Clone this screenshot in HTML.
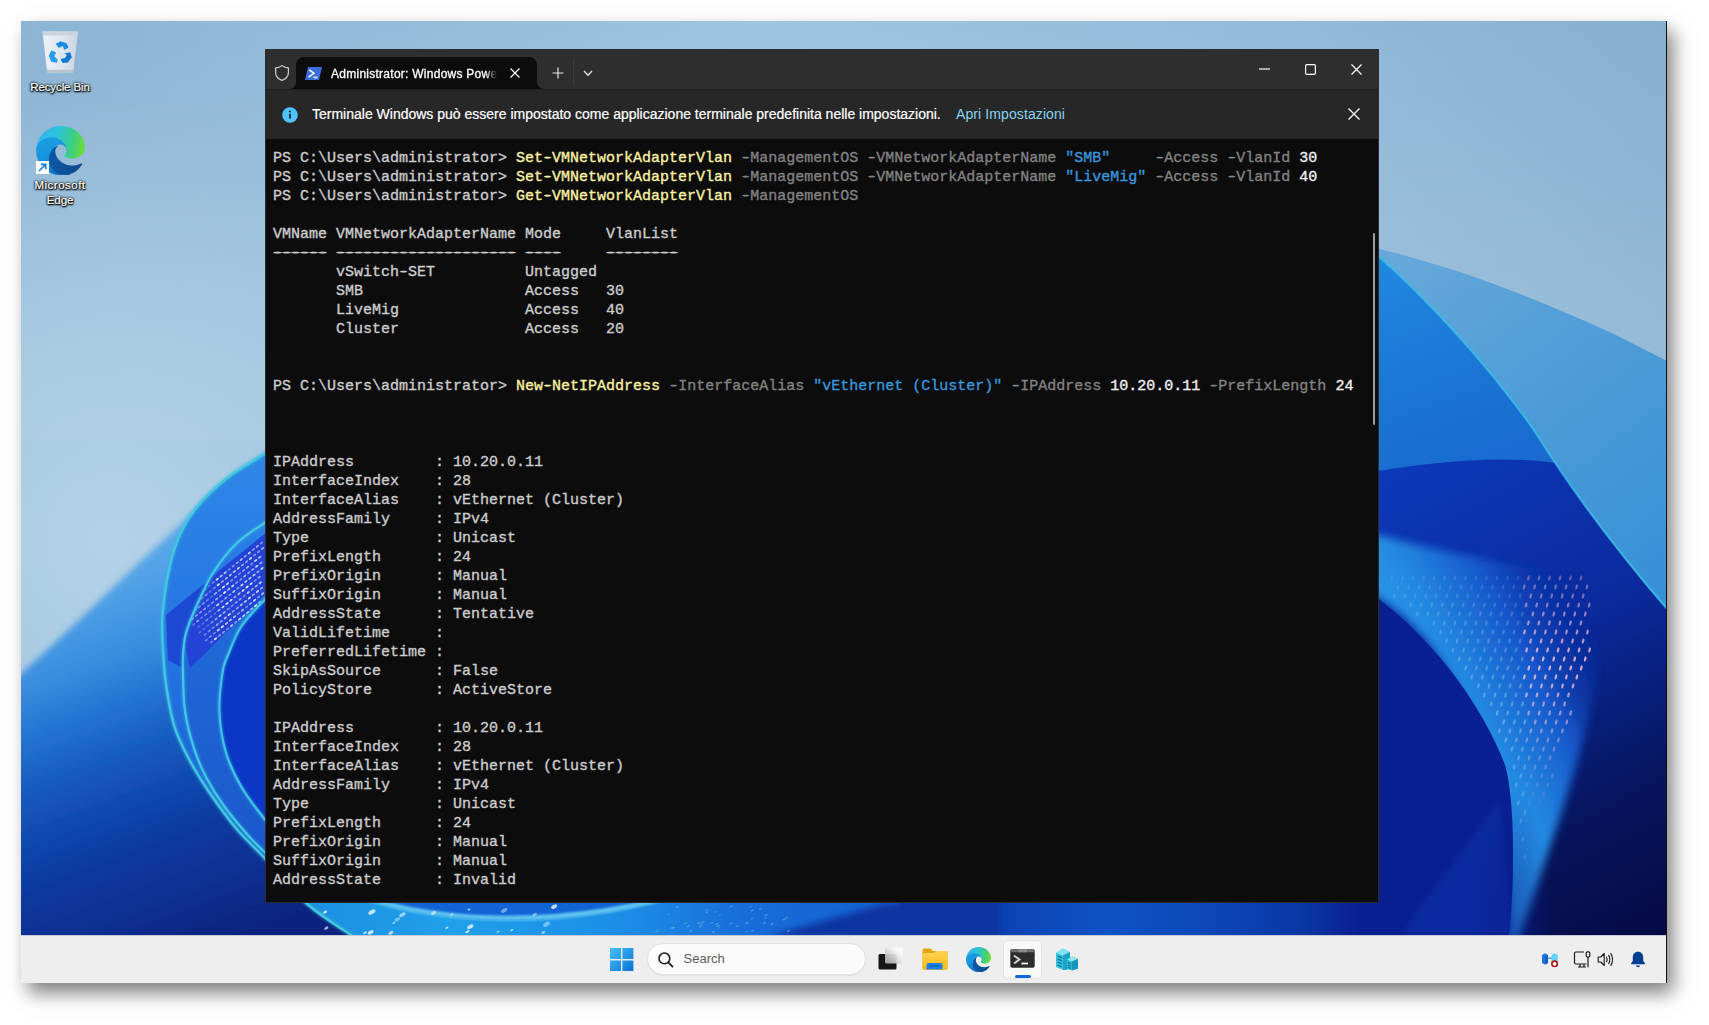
<!DOCTYPE html>
<html lang="it">
<head>
<meta charset="utf-8">
<title>Administrator: Windows PowerShell</title>
<style>
*{box-sizing:border-box;margin:0;padding:0}
html,body{width:1709px;height:1025px;overflow:hidden;background:#fff}
body{position:relative;font-family:"Liberation Sans",sans-serif}
#desk{position:absolute;left:21px;top:21px;width:1645px;height:962px;overflow:hidden;background:#9dc0dc}
#shadow{position:absolute;left:21px;top:21px;width:1645px;height:962px;box-shadow:1px 0 0 0 #111,7px 10px 18px 0 rgba(0,0,0,.5)}
#wall{position:absolute;left:0;top:0;width:1645px;height:914px;display:block}
#taskbar{position:absolute;left:0;top:914px;width:1645px;height:48px;background:#eeeeee;box-shadow:inset 0 1px 0 rgba(120,130,160,.35)}
#term{position:absolute;left:244px;top:28px;width:1114px;height:854px;background:#0c0c0c;border:1px solid #2c2c2c}
#tbar{position:absolute;left:0;top:0;width:1112px;height:39px;background:#2e2e2e}
#tab{position:absolute;left:30px;top:7px;width:241px;height:32px;background:#0c0c0c;border-radius:8px 8px 0 0}
#info{position:absolute;left:0;top:39px;width:1112px;height:50px;background:#272727;border-top:1px solid #1f1f1f}
#out{position:absolute;left:7px;top:99px;-webkit-text-stroke:.35px currentColor;font-family:"Liberation Mono",monospace;font-size:15px;line-height:19px;color:#cccccc;white-space:pre}
.d{text-shadow:2px 0 0 currentColor,-2px 0 0 currentColor}.h{text-shadow:1.200px 0 0 currentColor,-1.200px 0 0 currentColor}.y{color:#f9f1a5}.g{color:#828282}.b{color:#3a96dd}.w{color:#f2f2f2}
#ttl{position:absolute;left:35px;top:8px;width:166px;height:18px;overflow:hidden;white-space:nowrap;font-size:12px;letter-spacing:.26px;-webkit-text-stroke:.3px #fff;line-height:18px;color:#fff;-webkit-mask-image:linear-gradient(90deg,#000 93%,transparent);mask-image:linear-gradient(90deg,#000 93%,transparent)}
#itx{position:absolute;left:46px;top:14px;-webkit-text-stroke:.2px #fff;font-size:14px;line-height:20px;color:#fff;white-space:nowrap}
#ilk{position:absolute;left:690px;top:14px;letter-spacing:.1px;font-size:14px;line-height:20px;color:#86d3f0;white-space:nowrap}
#sb{position:absolute;left:1107px;top:183px;width:2px;height:192px;background:#9d9d9d;border-radius:1px}
.dl{position:absolute;text-align:center;color:#fff;font-size:11.500px;letter-spacing:-.1px;line-height:15px;text-shadow:0 1px 2px #000,0 0 2px #000,0 0 3px rgba(0,0,0,.9),1px 1px 1px rgba(0,0,0,.8);-webkit-text-stroke:.2px #fff}
#srch{position:absolute;left:626px;top:8px;width:219px;height:32px;border-radius:16px;background:#fbfbfb;border:1px solid #e2e2e2;box-shadow:0 1px 1px rgba(0,0,0,.06)}
#srch span{position:absolute;left:35.500px;top:6px;font-size:13px;line-height:18px;color:#5a5a5a}
</style>
</head>
<body>
<div id="shadow"></div>
<div id="desk">
<svg id="wall" viewBox="21 21 1645 914">
<defs>
<linearGradient id="sky" x1="0" y1="0" x2="1" y2="0"><stop offset="0" stop-color="#8cb4d4"/><stop offset=".45" stop-color="#9dc5e0"/><stop offset=".7" stop-color="#96bedc"/><stop offset="1" stop-color="#86b0d0"/></linearGradient>
<radialGradient id="skyhl" cx="110" cy="540" r="440" gradientUnits="userSpaceOnUse"><stop offset="0" stop-color="#b4d2e7"/><stop offset=".4" stop-color="#b0cfe5" stop-opacity=".8"/><stop offset="1" stop-color="#a8c8e0" stop-opacity="0"/></radialGradient>
<linearGradient id="lp" x1="181" y1="487" x2="335" y2="900" gradientUnits="userSpaceOnUse"><stop offset="0" stop-color="#6ab2ea"/><stop offset=".18" stop-color="#4f9fe6"/><stop offset=".3" stop-color="#3a8ee0"/><stop offset=".41" stop-color="#2474d2"/><stop offset=".55" stop-color="#1456bc"/><stop offset=".73" stop-color="#0c3aa0"/><stop offset=".86" stop-color="#0a3094"/><stop offset="1" stop-color="#08247e"/></linearGradient>
<linearGradient id="ring1" x1="230" y1="460" x2="230" y2="860" gradientUnits="userSpaceOnUse"><stop offset="0" stop-color="#2f86e6"/><stop offset=".5" stop-color="#2273e2"/><stop offset="1" stop-color="#1a59cc"/></linearGradient>
<linearGradient id="ring2" x1="0" y1="520" x2="0" y2="850" gradientUnits="userSpaceOnUse"><stop offset="0" stop-color="#2b84ea"/><stop offset=".35" stop-color="#2068d8"/><stop offset="1" stop-color="#1a58cc"/></linearGradient><linearGradient id="rp1" x1="1400" y1="250" x2="1666" y2="600" gradientUnits="userSpaceOnUse"><stop offset="0" stop-color="#66a8da"/><stop offset=".5" stop-color="#4c9bd8"/><stop offset="1" stop-color="#3690d6"/></linearGradient>
<linearGradient id="rp2" x1="1379" y1="260" x2="1500" y2="600" gradientUnits="userSpaceOnUse"><stop offset="0" stop-color="#2088e0"/><stop offset=".5" stop-color="#1a70d2"/><stop offset="1" stop-color="#1560c8"/></linearGradient>
<linearGradient id="rdark" x1="1420" y1="460" x2="1666" y2="935" gradientUnits="userSpaceOnUse"><stop offset="0" stop-color="#0c38ba"/><stop offset=".4" stop-color="#0a2a9c"/><stop offset=".75" stop-color="#07145c"/><stop offset="1" stop-color="#050a44"/></linearGradient>
<linearGradient id="rband" x1="1430" y1="730" x2="1600" y2="640" gradientUnits="userSpaceOnUse"><stop offset="0" stop-color="#2a9ce8"/><stop offset=".3" stop-color="#2386e0"/><stop offset=".62" stop-color="#1658cc"/><stop offset="1" stop-color="#0b30a8" stop-opacity="0"/></linearGradient>
<linearGradient id="bot" x1="21" y1="0" x2="1666" y2="0" gradientUnits="userSpaceOnUse"><stop offset="0" stop-color="#0d3aa4"/><stop offset=".17" stop-color="#0a3098"/><stop offset=".5" stop-color="#0a2f98"/><stop offset=".6" stop-color="#0c44b4"/><stop offset=".66" stop-color="#0e52c4"/><stop offset=".72" stop-color="#0c48b8"/><stop offset=".78" stop-color="#0a36a4"/><stop offset=".814" stop-color="#0a1f90"/><stop offset="1" stop-color="#050a48"/></linearGradient><linearGradient id="botb" x1="300" y1="0" x2="900" y2="0" gradientUnits="userSpaceOnUse"><stop offset="0" stop-color="#1c8ee0"/><stop offset=".25" stop-color="#20a0ea"/><stop offset=".55" stop-color="#1c8ce6"/><stop offset=".75" stop-color="#176cd8"/><stop offset="1" stop-color="#1560d0"/></linearGradient><filter id="bl1"><feGaussianBlur stdDeviation="1"/></filter>
<linearGradient id="skyv" x1="0" y1="21" x2="0" y2="420" gradientUnits="userSpaceOnUse"><stop offset="0" stop-color="#fff" stop-opacity="0"/><stop offset="1" stop-color="#fff" stop-opacity=".16"/></linearGradient><radialGradient id="rfade" cx=".5" cy=".5" r=".5"><stop offset="0" stop-color="#0a2090" stop-opacity=".6"/><stop offset=".5" stop-color="#0a2090" stop-opacity=".35"/><stop offset="1" stop-color="#0a2090" stop-opacity="0"/></radialGradient><filter id="bl3"><feGaussianBlur stdDeviation="3"/></filter>
<filter id="bl4"><feGaussianBlur stdDeviation="4"/></filter><filter id="bl6"><feGaussianBlur stdDeviation="6"/></filter>
</defs>
<rect x="21" y="21" width="1645" height="914" fill="url(#sky)"/>
<rect x="21" y="21" width="1645" height="420" fill="url(#skyv)"/><rect x="21" y="21" width="700" height="914" fill="url(#skyhl)"/>
<path d="M-10 702 C60 640 120 580 172 532 C210 497 240 472 290 435 L440 435 L440 960 L-10 960Z" fill="url(#lp)" filter="url(#bl3)"/>
<g>
<rect x="400" y="890" width="1266" height="50" fill="url(#bot)"/>
<path d="M290 885 L306 903 L351 935 L368 948 L900 948 L900 885Z" fill="url(#botb)"/>
<path d="M340 890 C420 925 560 935 700 890Z" fill="#1263d6"/>
<path d="M340 888 C420 923 560 933 700 888" fill="none" stroke="#6ad6f4" stroke-width="5" opacity=".85" filter="url(#bl1)"/>

<path d="M766 937 L880 905 L1000 890 L1000 940Z" fill="#0b34a2" filter="url(#bl3)"/>
<ellipse cx="470.3" cy="926.8" rx="3.4" ry="1.8" transform="rotate(-30 470.3 926.8)" fill="#dff4ff" opacity="0.87"/><ellipse cx="498.1" cy="931.8" rx="1.6" ry="0.8" transform="rotate(-30 498.1 931.8)" fill="#dff4ff" opacity="0.63"/><ellipse cx="546.5" cy="924.2" rx="3.7" ry="2.0" transform="rotate(-30 546.5 924.2)" fill="#dff4ff" opacity="0.46"/><ellipse cx="433.6" cy="912.9" rx="2.8" ry="1.5" transform="rotate(-30 433.6 912.9)" fill="#dff4ff" opacity="0.69"/><ellipse cx="325.1" cy="912.1" rx="2.2" ry="1.2" transform="rotate(-30 325.1 912.1)" fill="#dff4ff" opacity="0.86"/><ellipse cx="504.2" cy="910.5" rx="3.4" ry="1.8" transform="rotate(-30 504.2 910.5)" fill="#dff4ff" opacity="0.47"/><ellipse cx="469.0" cy="909.5" rx="1.5" ry="0.8" transform="rotate(-30 469.0 909.5)" fill="#dff4ff" opacity="0.84"/><ellipse cx="371.9" cy="912.0" rx="3.9" ry="2.1" transform="rotate(-30 371.9 912.0)" fill="#dff4ff" opacity="0.84"/><ellipse cx="390.9" cy="932.9" rx="2.8" ry="1.5" transform="rotate(-30 390.9 932.9)" fill="#dff4ff" opacity="0.74"/><ellipse cx="370.7" cy="932.3" rx="3.2" ry="1.7" transform="rotate(-30 370.7 932.3)" fill="#dff4ff" opacity="0.88"/><ellipse cx="534.7" cy="914.4" rx="2.4" ry="1.3" transform="rotate(-30 534.7 914.4)" fill="#dff4ff" opacity="0.48"/><ellipse cx="393.7" cy="922.9" rx="1.5" ry="0.8" transform="rotate(-30 393.7 922.9)" fill="#dff4ff" opacity="0.74"/><ellipse cx="402.4" cy="914.7" rx="3.5" ry="1.8" transform="rotate(-30 402.4 914.7)" fill="#dff4ff" opacity="0.64"/><ellipse cx="397.2" cy="919.5" rx="3.2" ry="1.7" transform="rotate(-30 397.2 919.5)" fill="#dff4ff" opacity="0.43"/><ellipse cx="554.1" cy="906.6" rx="3.3" ry="1.8" transform="rotate(-30 554.1 906.6)" fill="#dff4ff" opacity="0.82"/><ellipse cx="326.3" cy="928.1" rx="2.4" ry="1.3" transform="rotate(-30 326.3 928.1)" fill="#dff4ff" opacity="0.69"/><ellipse cx="365.1" cy="932.7" rx="2.0" ry="1.1" transform="rotate(-30 365.1 932.7)" fill="#dff4ff" opacity="0.78"/><ellipse cx="543.3" cy="932.4" rx="2.3" ry="1.2" transform="rotate(-30 543.3 932.4)" fill="#dff4ff" opacity="0.58"/><ellipse cx="446.9" cy="927.7" rx="1.8" ry="0.9" transform="rotate(-30 446.9 927.7)" fill="#dff4ff" opacity="0.77"/><ellipse cx="511.7" cy="930.1" rx="1.6" ry="0.8" transform="rotate(-30 511.7 930.1)" fill="#dff4ff" opacity="0.87"/><ellipse cx="467.4" cy="931.7" rx="2.3" ry="1.2" transform="rotate(-30 467.4 931.7)" fill="#dff4ff" opacity="0.86"/><ellipse cx="451.7" cy="914.7" rx="2.3" ry="1.2" transform="rotate(-30 451.7 914.7)" fill="#dff4ff" opacity="0.49"/><ellipse cx="746.5" cy="931.9" rx="1.8" ry=".7" transform="rotate(-25 746.5 931.9)" fill="#8fd0ff" opacity="0.25"/><ellipse cx="656.8" cy="931.7" rx="1.8" ry=".7" transform="rotate(-25 656.8 931.7)" fill="#8fd0ff" opacity="0.36"/><ellipse cx="706.8" cy="912.2" rx="1.8" ry=".7" transform="rotate(-25 706.8 912.2)" fill="#8fd0ff" opacity="0.38"/><ellipse cx="765.7" cy="917.8" rx="1.8" ry=".7" transform="rotate(-25 765.7 917.8)" fill="#8fd0ff" opacity="0.33"/><ellipse cx="657.8" cy="929.8" rx="1.8" ry=".7" transform="rotate(-25 657.8 929.8)" fill="#8fd0ff" opacity="0.21"/><ellipse cx="719.1" cy="927.8" rx="1.8" ry=".7" transform="rotate(-25 719.1 927.8)" fill="#8fd0ff" opacity="0.24"/><ellipse cx="752.4" cy="930.7" rx="1.8" ry=".7" transform="rotate(-25 752.4 930.7)" fill="#8fd0ff" opacity="0.39"/><ellipse cx="760.3" cy="908.8" rx="1.8" ry=".7" transform="rotate(-25 760.3 908.8)" fill="#8fd0ff" opacity="0.33"/><ellipse cx="670.9" cy="928.0" rx="1.8" ry=".7" transform="rotate(-25 670.9 928.0)" fill="#8fd0ff" opacity="0.29"/><ellipse cx="713.4" cy="932.0" rx="1.8" ry=".7" transform="rotate(-25 713.4 932.0)" fill="#8fd0ff" opacity="0.46"/><ellipse cx="786.6" cy="917.8" rx="1.8" ry=".7" transform="rotate(-25 786.6 917.8)" fill="#8fd0ff" opacity="0.35"/><ellipse cx="752.1" cy="918.5" rx="1.8" ry=".7" transform="rotate(-25 752.1 918.5)" fill="#8fd0ff" opacity="0.29"/><ellipse cx="706.5" cy="909.8" rx="1.8" ry=".7" transform="rotate(-25 706.5 909.8)" fill="#8fd0ff" opacity="0.31"/><ellipse cx="788.4" cy="931.0" rx="1.8" ry=".7" transform="rotate(-25 788.4 931.0)" fill="#8fd0ff" opacity="0.39"/><ellipse cx="719.9" cy="914.8" rx="1.8" ry=".7" transform="rotate(-25 719.9 914.8)" fill="#8fd0ff" opacity="0.23"/><ellipse cx="688.1" cy="926.3" rx="1.8" ry=".7" transform="rotate(-25 688.1 926.3)" fill="#8fd0ff" opacity="0.46"/><ellipse cx="700.6" cy="926.4" rx="1.8" ry=".7" transform="rotate(-25 700.6 926.4)" fill="#8fd0ff" opacity="0.43"/><ellipse cx="747.2" cy="923.3" rx="1.8" ry=".7" transform="rotate(-25 747.2 923.3)" fill="#8fd0ff" opacity="0.43"/><ellipse cx="700.9" cy="924.3" rx="1.8" ry=".7" transform="rotate(-25 700.9 924.3)" fill="#8fd0ff" opacity="0.28"/><ellipse cx="718.0" cy="926.0" rx="1.8" ry=".7" transform="rotate(-25 718.0 926.0)" fill="#8fd0ff" opacity="0.41"/><ellipse cx="691.1" cy="930.6" rx="1.8" ry=".7" transform="rotate(-25 691.1 930.6)" fill="#8fd0ff" opacity="0.39"/><ellipse cx="731.3" cy="906.3" rx="1.8" ry=".7" transform="rotate(-25 731.3 906.3)" fill="#8fd0ff" opacity="0.36"/><ellipse cx="685.1" cy="923.5" rx="1.8" ry=".7" transform="rotate(-25 685.1 923.5)" fill="#8fd0ff" opacity="0.34"/><ellipse cx="764.3" cy="922.8" rx="1.8" ry=".7" transform="rotate(-25 764.3 922.8)" fill="#8fd0ff" opacity="0.44"/><ellipse cx="698.7" cy="922.7" rx="1.8" ry=".7" transform="rotate(-25 698.7 922.7)" fill="#8fd0ff" opacity="0.42"/><ellipse cx="765.9" cy="915.1" rx="1.8" ry=".7" transform="rotate(-25 765.9 915.1)" fill="#8fd0ff" opacity="0.45"/><ellipse cx="771.8" cy="923.9" rx="1.8" ry=".7" transform="rotate(-25 771.8 923.9)" fill="#8fd0ff" opacity="0.49"/><ellipse cx="783.9" cy="919.5" rx="1.8" ry=".7" transform="rotate(-25 783.9 919.5)" fill="#8fd0ff" opacity="0.36"/><ellipse cx="673.3" cy="927.8" rx="1.8" ry=".7" transform="rotate(-25 673.3 927.8)" fill="#8fd0ff" opacity="0.48"/><ellipse cx="716.8" cy="924.0" rx="1.8" ry=".7" transform="rotate(-25 716.8 924.0)" fill="#8fd0ff" opacity="0.42"/><ellipse cx="752.2" cy="910.5" rx="1.8" ry=".7" transform="rotate(-25 752.2 910.5)" fill="#8fd0ff" opacity="0.43"/><ellipse cx="731.3" cy="923.3" rx="1.8" ry=".7" transform="rotate(-25 731.3 923.3)" fill="#8fd0ff" opacity="0.33"/><ellipse cx="737.3" cy="926.1" rx="1.8" ry=".7" transform="rotate(-25 737.3 926.1)" fill="#8fd0ff" opacity="0.39"/><ellipse cx="750.9" cy="906.7" rx="1.8" ry=".7" transform="rotate(-25 750.9 906.7)" fill="#8fd0ff" opacity="0.25"/><ellipse cx="711.7" cy="922.9" rx="1.8" ry=".7" transform="rotate(-25 711.7 922.9)" fill="#8fd0ff" opacity="0.27"/><ellipse cx="746.0" cy="922.4" rx="1.8" ry=".7" transform="rotate(-25 746.0 922.4)" fill="#8fd0ff" opacity="0.21"/><ellipse cx="716.0" cy="911.9" rx="1.8" ry=".7" transform="rotate(-25 716.0 911.9)" fill="#8fd0ff" opacity="0.22"/><ellipse cx="668.7" cy="914.3" rx="1.8" ry=".7" transform="rotate(-25 668.7 914.3)" fill="#8fd0ff" opacity="0.25"/><ellipse cx="677.1" cy="906.9" rx="1.8" ry=".7" transform="rotate(-25 677.1 906.9)" fill="#8fd0ff" opacity="0.34"/><ellipse cx="703.2" cy="921.9" rx="1.8" ry=".7" transform="rotate(-25 703.2 921.9)" fill="#8fd0ff" opacity="0.38"/>
</g>
<!-- left petal -->
<path d="M292.0 436.0 C287.4 439.0 275.5 446.8 264.5 454.0 C253.5 461.2 237.8 469.5 226.0 479.0 C214.2 488.5 202.2 500.3 194.0 511.0 C185.8 521.7 181.0 531.5 176.5 543.0 C172.0 554.5 169.3 567.8 167.0 580.0 C164.7 592.2 163.2 606.0 162.5 616.0 C161.8 626.0 161.9 628.8 162.5 640.0 C163.1 651.2 163.8 668.7 165.8 683.0 C167.8 697.3 170.4 713.2 174.3 726.0 C178.2 738.8 183.3 748.6 189.4 760.0 C195.5 771.4 202.9 783.0 210.8 794.5 C218.7 806.0 227.7 818.4 236.6 829.0 C245.5 839.6 252.9 845.7 264.5 858.0 L292 886 L292 436Z" fill="url(#ring1)"/>
<path d="M166 615 L292 512 L292 568 L186 670 L168 660Z" fill="#1b49d2"/>
<path d="M292.0 506.0 C287.4 508.8 273.7 516.8 264.5 523.0 C255.3 529.2 245.6 534.7 237.0 543.0 C228.4 551.3 219.8 562.3 213.0 573.0 C206.2 583.7 200.5 597.0 196.0 607.0 C191.5 617.0 188.2 625.0 186.0 633.0 C183.8 641.0 183.5 648.5 183.0 655.0 C182.5 661.5 182.7 662.7 183.0 672.0 C183.3 681.3 183.2 698.5 185.0 711.0 C186.8 723.5 190.1 736.0 193.6 747.0 C197.1 758.0 200.9 767.2 206.0 777.0 C211.1 786.8 217.3 796.7 224.0 806.0 C230.7 815.3 239.2 825.3 246.0 833.0 C252.8 840.7 256.8 844.8 264.5 852.0 C272.2 859.2 287.4 872.0 292.0 876.0 L292 506Z" fill="url(#ring2)"/>
<path d="M210 578 L292 512 L292 568 L190 668 L184 640Z" fill="#2343d6"/>
<clipPath id="cpS"><path d="M292.0 506.0 C287.4 508.8 273.7 516.8 264.5 523.0 C255.3 529.2 245.6 534.7 237.0 543.0 C228.4 551.3 219.8 562.3 213.0 573.0 C206.2 583.7 200.5 597.0 196.0 607.0 C191.5 617.0 188.2 625.0 186.0 633.0 C183.8 641.0 183.5 648.5 183.0 655.0 C182.5 661.5 182.7 662.7 183.0 672.0 C183.3 681.3 183.2 698.5 185.0 711.0 C186.8 723.5 190.1 736.0 193.6 747.0 C197.1 758.0 200.9 767.2 206.0 777.0 C211.1 786.8 217.3 796.7 224.0 806.0 C230.7 815.3 239.2 825.3 246.0 833.0 C252.8 840.7 256.8 844.8 264.5 852.0 C272.2 859.2 287.4 872.0 292.0 876.0 L292 506Z"/></clipPath><g clip-path="url(#cpS)"><ellipse cx="181.0" cy="609.0" rx="1.900" ry=".95" transform="rotate(-39 181.0 609.0)" fill="#e6ecff" opacity="0.36"/><ellipse cx="185.0" cy="605.7" rx="1.900" ry=".95" transform="rotate(-39 185.0 605.7)" fill="#f4e4ff" opacity="0.48"/><ellipse cx="189.0" cy="602.4" rx="1.900" ry=".95" transform="rotate(-39 189.0 602.4)" fill="#e6ecff" opacity="0.36"/><ellipse cx="193.1" cy="599.1" rx="1.900" ry=".95" transform="rotate(-39 193.1 599.1)" fill="#e6ecff" opacity="0.28"/><ellipse cx="197.1" cy="595.8" rx="1.900" ry=".95" transform="rotate(-39 197.1 595.8)" fill="#e6ecff" opacity="0.36"/><ellipse cx="201.1" cy="592.5" rx="1.900" ry=".95" transform="rotate(-39 201.1 592.5)" fill="#ffffff" opacity="0.46"/><ellipse cx="205.1" cy="589.2" rx="1.900" ry=".95" transform="rotate(-39 205.1 589.2)" fill="#ffffff" opacity="0.36"/><ellipse cx="209.1" cy="585.9" rx="1.900" ry=".95" transform="rotate(-39 209.1 585.9)" fill="#e6ecff" opacity="0.25"/><ellipse cx="213.2" cy="582.6" rx="1.900" ry=".95" transform="rotate(-39 213.2 582.6)" fill="#e6ecff" opacity="0.41"/><ellipse cx="217.2" cy="579.3" rx="1.900" ry=".95" transform="rotate(-39 217.2 579.3)" fill="#f4e4ff" opacity="0.94"/><ellipse cx="221.2" cy="576.0" rx="1.900" ry=".95" transform="rotate(-39 221.2 576.0)" fill="#e6ecff" opacity="0.76"/><ellipse cx="225.2" cy="572.7" rx="1.900" ry=".95" transform="rotate(-39 225.2 572.7)" fill="#e6ecff" opacity="0.76"/><ellipse cx="229.2" cy="569.4" rx="1.900" ry=".95" transform="rotate(-39 229.2 569.4)" fill="#e6ecff" opacity="0.41"/><ellipse cx="233.3" cy="566.1" rx="1.900" ry=".95" transform="rotate(-39 233.3 566.1)" fill="#ffffff" opacity="0.43"/><ellipse cx="237.3" cy="562.8" rx="1.900" ry=".95" transform="rotate(-39 237.3 562.8)" fill="#ffffff" opacity="0.50"/><ellipse cx="241.3" cy="559.5" rx="1.900" ry=".95" transform="rotate(-39 241.3 559.5)" fill="#f4e4ff" opacity="0.73"/><ellipse cx="245.3" cy="556.2" rx="1.900" ry=".95" transform="rotate(-39 245.3 556.2)" fill="#e6ecff" opacity="0.58"/><ellipse cx="249.3" cy="552.9" rx="1.900" ry=".95" transform="rotate(-39 249.3 552.9)" fill="#e6ecff" opacity="0.86"/><ellipse cx="253.4" cy="549.6" rx="1.900" ry=".95" transform="rotate(-39 253.4 549.6)" fill="#f4e4ff" opacity="0.53"/><ellipse cx="257.4" cy="546.3" rx="1.900" ry=".95" transform="rotate(-39 257.4 546.3)" fill="#e6ecff" opacity="0.67"/><ellipse cx="261.4" cy="543.0" rx="1.900" ry=".95" transform="rotate(-39 261.4 543.0)" fill="#e6ecff" opacity="0.45"/><ellipse cx="186.2" cy="611.2" rx="1.900" ry=".95" transform="rotate(-39 186.2 611.2)" fill="#e6ecff" opacity="0.30"/><ellipse cx="190.2" cy="607.9" rx="1.900" ry=".95" transform="rotate(-39 190.2 607.9)" fill="#ffffff" opacity="0.52"/><ellipse cx="194.2" cy="604.6" rx="1.900" ry=".95" transform="rotate(-39 194.2 604.6)" fill="#f4e4ff" opacity="0.43"/><ellipse cx="198.2" cy="601.3" rx="1.900" ry=".95" transform="rotate(-39 198.2 601.3)" fill="#e6ecff" opacity="0.45"/><ellipse cx="202.3" cy="598.0" rx="1.900" ry=".95" transform="rotate(-39 202.3 598.0)" fill="#ffffff" opacity="0.31"/><ellipse cx="206.3" cy="594.7" rx="1.900" ry=".95" transform="rotate(-39 206.3 594.7)" fill="#ffffff" opacity="0.39"/><ellipse cx="210.3" cy="591.4" rx="1.900" ry=".95" transform="rotate(-39 210.3 591.4)" fill="#f4e4ff" opacity="0.34"/><ellipse cx="214.3" cy="588.1" rx="1.900" ry=".95" transform="rotate(-39 214.3 588.1)" fill="#ffffff" opacity="0.34"/><ellipse cx="218.3" cy="584.8" rx="1.900" ry=".95" transform="rotate(-39 218.3 584.8)" fill="#ffffff" opacity="0.87"/><ellipse cx="222.4" cy="581.5" rx="1.900" ry=".95" transform="rotate(-39 222.4 581.5)" fill="#ffffff" opacity="0.52"/><ellipse cx="226.4" cy="578.2" rx="1.900" ry=".95" transform="rotate(-39 226.4 578.2)" fill="#e6ecff" opacity="0.66"/><ellipse cx="230.4" cy="574.9" rx="1.900" ry=".95" transform="rotate(-39 230.4 574.9)" fill="#ffffff" opacity="0.62"/><ellipse cx="234.4" cy="571.6" rx="1.900" ry=".95" transform="rotate(-39 234.4 571.6)" fill="#ffffff" opacity="0.71"/><ellipse cx="238.4" cy="568.3" rx="1.900" ry=".95" transform="rotate(-39 238.4 568.3)" fill="#f4e4ff" opacity="0.83"/><ellipse cx="242.5" cy="565.0" rx="1.900" ry=".95" transform="rotate(-39 242.5 565.0)" fill="#f4e4ff" opacity="0.59"/><ellipse cx="246.5" cy="561.7" rx="1.900" ry=".95" transform="rotate(-39 246.5 561.7)" fill="#f4e4ff" opacity="0.58"/><ellipse cx="250.5" cy="558.4" rx="1.900" ry=".95" transform="rotate(-39 250.5 558.4)" fill="#ffffff" opacity="0.82"/><ellipse cx="254.5" cy="555.1" rx="1.900" ry=".95" transform="rotate(-39 254.5 555.1)" fill="#e6ecff" opacity="0.47"/><ellipse cx="258.5" cy="551.8" rx="1.900" ry=".95" transform="rotate(-39 258.5 551.8)" fill="#ffffff" opacity="0.46"/><ellipse cx="262.6" cy="548.5" rx="1.900" ry=".95" transform="rotate(-39 262.6 548.5)" fill="#f4e4ff" opacity="0.66"/><ellipse cx="187.3" cy="616.7" rx="1.900" ry=".95" transform="rotate(-39 187.3 616.7)" fill="#e6ecff" opacity="0.27"/><ellipse cx="191.4" cy="613.4" rx="1.900" ry=".95" transform="rotate(-39 191.4 613.4)" fill="#e6ecff" opacity="0.28"/><ellipse cx="195.4" cy="610.1" rx="1.900" ry=".95" transform="rotate(-39 195.4 610.1)" fill="#e6ecff" opacity="0.28"/><ellipse cx="199.4" cy="606.8" rx="1.900" ry=".95" transform="rotate(-39 199.4 606.8)" fill="#f4e4ff" opacity="0.45"/><ellipse cx="203.4" cy="603.5" rx="1.900" ry=".95" transform="rotate(-39 203.4 603.5)" fill="#ffffff" opacity="0.41"/><ellipse cx="207.4" cy="600.2" rx="1.900" ry=".95" transform="rotate(-39 207.4 600.2)" fill="#ffffff" opacity="0.34"/><ellipse cx="211.5" cy="596.9" rx="1.900" ry=".95" transform="rotate(-39 211.5 596.9)" fill="#e6ecff" opacity="0.22"/><ellipse cx="215.5" cy="593.6" rx="1.900" ry=".95" transform="rotate(-39 215.5 593.6)" fill="#ffffff" opacity="0.57"/><ellipse cx="219.5" cy="590.3" rx="1.900" ry=".95" transform="rotate(-39 219.5 590.3)" fill="#f4e4ff" opacity="0.52"/><ellipse cx="223.5" cy="587.0" rx="1.900" ry=".95" transform="rotate(-39 223.5 587.0)" fill="#e6ecff" opacity="0.95"/><ellipse cx="227.5" cy="583.7" rx="1.900" ry=".95" transform="rotate(-39 227.5 583.7)" fill="#ffffff" opacity="0.75"/><ellipse cx="231.6" cy="580.4" rx="1.900" ry=".95" transform="rotate(-39 231.6 580.4)" fill="#ffffff" opacity="0.42"/><ellipse cx="235.6" cy="577.1" rx="1.900" ry=".95" transform="rotate(-39 235.6 577.1)" fill="#f4e4ff" opacity="0.52"/><ellipse cx="239.6" cy="573.8" rx="1.900" ry=".95" transform="rotate(-39 239.6 573.8)" fill="#e6ecff" opacity="0.41"/><ellipse cx="243.6" cy="570.5" rx="1.900" ry=".95" transform="rotate(-39 243.6 570.5)" fill="#f4e4ff" opacity="0.58"/><ellipse cx="247.6" cy="567.2" rx="1.900" ry=".95" transform="rotate(-39 247.6 567.2)" fill="#ffffff" opacity="0.61"/><ellipse cx="251.7" cy="563.9" rx="1.900" ry=".95" transform="rotate(-39 251.7 563.9)" fill="#e6ecff" opacity="0.45"/><ellipse cx="255.7" cy="560.6" rx="1.900" ry=".95" transform="rotate(-39 255.7 560.6)" fill="#ffffff" opacity="0.75"/><ellipse cx="259.7" cy="557.3" rx="1.900" ry=".95" transform="rotate(-39 259.7 557.3)" fill="#f4e4ff" opacity="0.73"/><ellipse cx="192.5" cy="618.9" rx="1.900" ry=".95" transform="rotate(-39 192.5 618.9)" fill="#ffffff" opacity="0.41"/><ellipse cx="196.5" cy="615.6" rx="1.900" ry=".95" transform="rotate(-39 196.5 615.6)" fill="#f4e4ff" opacity="0.51"/><ellipse cx="200.6" cy="612.3" rx="1.900" ry=".95" transform="rotate(-39 200.6 612.3)" fill="#ffffff" opacity="0.47"/><ellipse cx="204.6" cy="609.0" rx="1.900" ry=".95" transform="rotate(-39 204.6 609.0)" fill="#ffffff" opacity="0.48"/><ellipse cx="208.6" cy="605.7" rx="1.900" ry=".95" transform="rotate(-39 208.6 605.7)" fill="#f4e4ff" opacity="0.41"/><ellipse cx="212.6" cy="602.4" rx="1.900" ry=".95" transform="rotate(-39 212.6 602.4)" fill="#e6ecff" opacity="0.49"/><ellipse cx="216.6" cy="599.1" rx="1.900" ry=".95" transform="rotate(-39 216.6 599.1)" fill="#ffffff" opacity="0.54"/><ellipse cx="220.7" cy="595.8" rx="1.900" ry=".95" transform="rotate(-39 220.7 595.8)" fill="#e6ecff" opacity="0.49"/><ellipse cx="224.7" cy="592.5" rx="1.900" ry=".95" transform="rotate(-39 224.7 592.5)" fill="#ffffff" opacity="0.92"/><ellipse cx="228.7" cy="589.2" rx="1.900" ry=".95" transform="rotate(-39 228.7 589.2)" fill="#f4e4ff" opacity="0.78"/><ellipse cx="232.7" cy="585.9" rx="1.900" ry=".95" transform="rotate(-39 232.7 585.9)" fill="#e6ecff" opacity="0.89"/><ellipse cx="236.7" cy="582.6" rx="1.900" ry=".95" transform="rotate(-39 236.7 582.6)" fill="#ffffff" opacity="0.44"/><ellipse cx="240.8" cy="579.4" rx="1.900" ry=".95" transform="rotate(-39 240.8 579.4)" fill="#ffffff" opacity="0.46"/><ellipse cx="244.8" cy="576.1" rx="1.900" ry=".95" transform="rotate(-39 244.8 576.1)" fill="#f4e4ff" opacity="0.68"/><ellipse cx="248.8" cy="572.8" rx="1.900" ry=".95" transform="rotate(-39 248.8 572.8)" fill="#e6ecff" opacity="0.53"/><ellipse cx="252.8" cy="569.5" rx="1.900" ry=".95" transform="rotate(-39 252.8 569.5)" fill="#f4e4ff" opacity="0.62"/><ellipse cx="256.8" cy="566.2" rx="1.900" ry=".95" transform="rotate(-39 256.8 566.2)" fill="#e6ecff" opacity="0.85"/><ellipse cx="260.9" cy="562.9" rx="1.900" ry=".95" transform="rotate(-39 260.9 562.9)" fill="#e6ecff" opacity="0.67"/><ellipse cx="193.7" cy="624.4" rx="1.900" ry=".95" transform="rotate(-39 193.7 624.4)" fill="#e6ecff" opacity="0.27"/><ellipse cx="197.7" cy="621.1" rx="1.900" ry=".95" transform="rotate(-39 197.7 621.1)" fill="#ffffff" opacity="0.52"/><ellipse cx="201.7" cy="617.8" rx="1.900" ry=".95" transform="rotate(-39 201.7 617.8)" fill="#e6ecff" opacity="0.29"/><ellipse cx="205.7" cy="614.6" rx="1.900" ry=".95" transform="rotate(-39 205.7 614.6)" fill="#e6ecff" opacity="0.42"/><ellipse cx="209.8" cy="611.3" rx="1.900" ry=".95" transform="rotate(-39 209.8 611.3)" fill="#f4e4ff" opacity="0.41"/><ellipse cx="213.8" cy="608.0" rx="1.900" ry=".95" transform="rotate(-39 213.8 608.0)" fill="#ffffff" opacity="0.28"/><ellipse cx="217.8" cy="604.7" rx="1.900" ry=".95" transform="rotate(-39 217.8 604.7)" fill="#ffffff" opacity="0.81"/><ellipse cx="221.8" cy="601.4" rx="1.900" ry=".95" transform="rotate(-39 221.8 601.4)" fill="#f4e4ff" opacity="0.55"/><ellipse cx="225.8" cy="598.1" rx="1.900" ry=".95" transform="rotate(-39 225.8 598.1)" fill="#ffffff" opacity="0.54"/><ellipse cx="229.9" cy="594.8" rx="1.900" ry=".95" transform="rotate(-39 229.9 594.8)" fill="#f4e4ff" opacity="0.50"/><ellipse cx="233.9" cy="591.5" rx="1.900" ry=".95" transform="rotate(-39 233.9 591.5)" fill="#ffffff" opacity="0.69"/><ellipse cx="237.9" cy="588.2" rx="1.900" ry=".95" transform="rotate(-39 237.9 588.2)" fill="#ffffff" opacity="0.45"/><ellipse cx="241.9" cy="584.9" rx="1.900" ry=".95" transform="rotate(-39 241.9 584.9)" fill="#f4e4ff" opacity="0.89"/><ellipse cx="245.9" cy="581.6" rx="1.900" ry=".95" transform="rotate(-39 245.9 581.6)" fill="#e6ecff" opacity="0.76"/><ellipse cx="250.0" cy="578.3" rx="1.900" ry=".95" transform="rotate(-39 250.0 578.3)" fill="#ffffff" opacity="0.69"/><ellipse cx="254.0" cy="575.0" rx="1.900" ry=".95" transform="rotate(-39 254.0 575.0)" fill="#ffffff" opacity="0.72"/><ellipse cx="258.0" cy="571.7" rx="1.900" ry=".95" transform="rotate(-39 258.0 571.7)" fill="#f4e4ff" opacity="0.66"/><ellipse cx="262.0" cy="568.4" rx="1.900" ry=".95" transform="rotate(-39 262.0 568.4)" fill="#ffffff" opacity="0.79"/><ellipse cx="198.9" cy="626.7" rx="1.900" ry=".95" transform="rotate(-39 198.9 626.7)" fill="#e6ecff" opacity="0.23"/><ellipse cx="202.9" cy="623.4" rx="1.900" ry=".95" transform="rotate(-39 202.9 623.4)" fill="#ffffff" opacity="0.24"/><ellipse cx="206.9" cy="620.1" rx="1.900" ry=".95" transform="rotate(-39 206.9 620.1)" fill="#f4e4ff" opacity="0.44"/><ellipse cx="210.9" cy="616.8" rx="1.900" ry=".95" transform="rotate(-39 210.9 616.8)" fill="#ffffff" opacity="0.26"/><ellipse cx="214.9" cy="613.5" rx="1.900" ry=".95" transform="rotate(-39 214.9 613.5)" fill="#e6ecff" opacity="0.24"/><ellipse cx="219.0" cy="610.2" rx="1.900" ry=".95" transform="rotate(-39 219.0 610.2)" fill="#ffffff" opacity="0.60"/><ellipse cx="223.0" cy="606.9" rx="1.900" ry=".95" transform="rotate(-39 223.0 606.9)" fill="#e6ecff" opacity="0.90"/><ellipse cx="227.0" cy="603.6" rx="1.900" ry=".95" transform="rotate(-39 227.0 603.6)" fill="#ffffff" opacity="0.81"/><ellipse cx="231.0" cy="600.3" rx="1.900" ry=".95" transform="rotate(-39 231.0 600.3)" fill="#f4e4ff" opacity="0.84"/><ellipse cx="235.0" cy="597.0" rx="1.900" ry=".95" transform="rotate(-39 235.0 597.0)" fill="#e6ecff" opacity="0.59"/><ellipse cx="239.1" cy="593.7" rx="1.900" ry=".95" transform="rotate(-39 239.1 593.7)" fill="#ffffff" opacity="0.66"/><ellipse cx="243.1" cy="590.4" rx="1.900" ry=".95" transform="rotate(-39 243.1 590.4)" fill="#f4e4ff" opacity="0.88"/><ellipse cx="247.1" cy="587.1" rx="1.900" ry=".95" transform="rotate(-39 247.1 587.1)" fill="#ffffff" opacity="0.92"/><ellipse cx="251.1" cy="583.8" rx="1.900" ry=".95" transform="rotate(-39 251.1 583.8)" fill="#e6ecff" opacity="0.87"/><ellipse cx="255.1" cy="580.5" rx="1.900" ry=".95" transform="rotate(-39 255.1 580.5)" fill="#e6ecff" opacity="0.41"/><ellipse cx="259.2" cy="577.2" rx="1.900" ry=".95" transform="rotate(-39 259.2 577.2)" fill="#e6ecff" opacity="0.61"/><ellipse cx="200.0" cy="632.2" rx="1.900" ry=".95" transform="rotate(-39 200.0 632.2)" fill="#ffffff" opacity="0.22"/><ellipse cx="204.0" cy="628.9" rx="1.900" ry=".95" transform="rotate(-39 204.0 628.9)" fill="#e6ecff" opacity="0.24"/><ellipse cx="208.1" cy="625.6" rx="1.900" ry=".95" transform="rotate(-39 208.1 625.6)" fill="#f4e4ff" opacity="0.25"/><ellipse cx="212.1" cy="622.3" rx="1.900" ry=".95" transform="rotate(-39 212.1 622.3)" fill="#e6ecff" opacity="0.49"/><ellipse cx="216.1" cy="619.0" rx="1.900" ry=".95" transform="rotate(-39 216.1 619.0)" fill="#e6ecff" opacity="0.58"/><ellipse cx="220.1" cy="615.7" rx="1.900" ry=".95" transform="rotate(-39 220.1 615.7)" fill="#f4e4ff" opacity="0.78"/><ellipse cx="224.1" cy="612.4" rx="1.900" ry=".95" transform="rotate(-39 224.1 612.4)" fill="#e6ecff" opacity="0.64"/><ellipse cx="228.2" cy="609.1" rx="1.900" ry=".95" transform="rotate(-39 228.2 609.1)" fill="#e6ecff" opacity="0.45"/><ellipse cx="232.2" cy="605.8" rx="1.900" ry=".95" transform="rotate(-39 232.2 605.8)" fill="#e6ecff" opacity="0.42"/><ellipse cx="236.2" cy="602.5" rx="1.900" ry=".95" transform="rotate(-39 236.2 602.5)" fill="#ffffff" opacity="0.45"/><ellipse cx="240.2" cy="599.2" rx="1.900" ry=".95" transform="rotate(-39 240.2 599.2)" fill="#e6ecff" opacity="0.53"/><ellipse cx="244.2" cy="595.9" rx="1.900" ry=".95" transform="rotate(-39 244.2 595.9)" fill="#e6ecff" opacity="0.46"/><ellipse cx="248.3" cy="592.6" rx="1.900" ry=".95" transform="rotate(-39 248.3 592.6)" fill="#f4e4ff" opacity="0.76"/><ellipse cx="252.3" cy="589.3" rx="1.900" ry=".95" transform="rotate(-39 252.3 589.3)" fill="#ffffff" opacity="0.54"/><ellipse cx="256.3" cy="586.0" rx="1.900" ry=".95" transform="rotate(-39 256.3 586.0)" fill="#ffffff" opacity="0.60"/><ellipse cx="260.3" cy="582.7" rx="1.900" ry=".95" transform="rotate(-39 260.3 582.7)" fill="#ffffff" opacity="0.77"/><ellipse cx="205.2" cy="634.4" rx="1.900" ry=".95" transform="rotate(-39 205.2 634.4)" fill="#f4e4ff" opacity="0.38"/><ellipse cx="209.2" cy="631.1" rx="1.900" ry=".95" transform="rotate(-39 209.2 631.1)" fill="#f4e4ff" opacity="0.42"/><ellipse cx="213.2" cy="627.8" rx="1.900" ry=".95" transform="rotate(-39 213.2 627.8)" fill="#ffffff" opacity="0.37"/><ellipse cx="217.3" cy="624.5" rx="1.900" ry=".95" transform="rotate(-39 217.3 624.5)" fill="#e6ecff" opacity="0.58"/><ellipse cx="221.3" cy="621.2" rx="1.900" ry=".95" transform="rotate(-39 221.3 621.2)" fill="#e6ecff" opacity="0.54"/><ellipse cx="225.3" cy="617.9" rx="1.900" ry=".95" transform="rotate(-39 225.3 617.9)" fill="#ffffff" opacity="0.64"/><ellipse cx="229.3" cy="614.6" rx="1.900" ry=".95" transform="rotate(-39 229.3 614.6)" fill="#f4e4ff" opacity="0.88"/><ellipse cx="233.3" cy="611.3" rx="1.900" ry=".95" transform="rotate(-39 233.3 611.3)" fill="#f4e4ff" opacity="0.52"/><ellipse cx="237.4" cy="608.0" rx="1.900" ry=".95" transform="rotate(-39 237.4 608.0)" fill="#ffffff" opacity="0.52"/><ellipse cx="241.4" cy="604.7" rx="1.900" ry=".95" transform="rotate(-39 241.4 604.7)" fill="#ffffff" opacity="0.67"/><ellipse cx="245.4" cy="601.4" rx="1.900" ry=".95" transform="rotate(-39 245.4 601.4)" fill="#f4e4ff" opacity="0.79"/><ellipse cx="249.4" cy="598.1" rx="1.900" ry=".95" transform="rotate(-39 249.4 598.1)" fill="#ffffff" opacity="0.85"/><ellipse cx="253.4" cy="594.8" rx="1.900" ry=".95" transform="rotate(-39 253.4 594.8)" fill="#f4e4ff" opacity="0.65"/><ellipse cx="257.5" cy="591.5" rx="1.900" ry=".95" transform="rotate(-39 257.5 591.5)" fill="#f4e4ff" opacity="0.91"/><ellipse cx="261.5" cy="588.2" rx="1.900" ry=".95" transform="rotate(-39 261.5 588.2)" fill="#e6ecff" opacity="0.61"/><ellipse cx="206.4" cy="639.9" rx="1.900" ry=".95" transform="rotate(-39 206.4 639.9)" fill="#f4e4ff" opacity="0.37"/><ellipse cx="210.4" cy="636.6" rx="1.900" ry=".95" transform="rotate(-39 210.4 636.6)" fill="#e6ecff" opacity="0.44"/><ellipse cx="214.4" cy="633.3" rx="1.900" ry=".95" transform="rotate(-39 214.4 633.3)" fill="#ffffff" opacity="0.36"/><ellipse cx="218.4" cy="630.0" rx="1.900" ry=".95" transform="rotate(-39 218.4 630.0)" fill="#f4e4ff" opacity="0.86"/><ellipse cx="222.4" cy="626.7" rx="1.900" ry=".95" transform="rotate(-39 222.4 626.7)" fill="#ffffff" opacity="0.88"/><ellipse cx="226.5" cy="623.4" rx="1.900" ry=".95" transform="rotate(-39 226.5 623.4)" fill="#f4e4ff" opacity="0.77"/><ellipse cx="230.5" cy="620.1" rx="1.900" ry=".95" transform="rotate(-39 230.5 620.1)" fill="#f4e4ff" opacity="0.71"/><ellipse cx="234.5" cy="616.8" rx="1.900" ry=".95" transform="rotate(-39 234.5 616.8)" fill="#e6ecff" opacity="0.76"/><ellipse cx="238.5" cy="613.5" rx="1.900" ry=".95" transform="rotate(-39 238.5 613.5)" fill="#ffffff" opacity="0.41"/><ellipse cx="242.5" cy="610.2" rx="1.900" ry=".95" transform="rotate(-39 242.5 610.2)" fill="#ffffff" opacity="0.62"/><ellipse cx="246.6" cy="606.9" rx="1.900" ry=".95" transform="rotate(-39 246.6 606.9)" fill="#f4e4ff" opacity="0.41"/><ellipse cx="250.6" cy="603.6" rx="1.900" ry=".95" transform="rotate(-39 250.6 603.6)" fill="#ffffff" opacity="0.53"/><ellipse cx="254.6" cy="600.3" rx="1.900" ry=".95" transform="rotate(-39 254.6 600.3)" fill="#e6ecff" opacity="0.84"/><ellipse cx="258.6" cy="597.0" rx="1.900" ry=".95" transform="rotate(-39 258.6 597.0)" fill="#ffffff" opacity="0.46"/><ellipse cx="262.6" cy="593.7" rx="1.900" ry=".95" transform="rotate(-39 262.6 593.7)" fill="#e6ecff" opacity="0.75"/><ellipse cx="211.5" cy="642.1" rx="1.900" ry=".95" transform="rotate(-39 211.5 642.1)" fill="#f4e4ff" opacity="0.41"/><ellipse cx="215.6" cy="638.8" rx="1.900" ry=".95" transform="rotate(-39 215.6 638.8)" fill="#e6ecff" opacity="0.93"/><ellipse cx="219.6" cy="635.5" rx="1.900" ry=".95" transform="rotate(-39 219.6 635.5)" fill="#f4e4ff" opacity="0.51"/><ellipse cx="223.6" cy="632.2" rx="1.900" ry=".95" transform="rotate(-39 223.6 632.2)" fill="#e6ecff" opacity="0.54"/><ellipse cx="227.6" cy="628.9" rx="1.900" ry=".95" transform="rotate(-39 227.6 628.9)" fill="#f4e4ff" opacity="0.41"/><ellipse cx="231.6" cy="625.6" rx="1.900" ry=".95" transform="rotate(-39 231.6 625.6)" fill="#ffffff" opacity="0.69"/><ellipse cx="235.7" cy="622.3" rx="1.900" ry=".95" transform="rotate(-39 235.7 622.3)" fill="#f4e4ff" opacity="0.50"/><ellipse cx="239.7" cy="619.0" rx="1.900" ry=".95" transform="rotate(-39 239.7 619.0)" fill="#e6ecff" opacity="0.83"/><ellipse cx="243.7" cy="615.7" rx="1.900" ry=".95" transform="rotate(-39 243.7 615.7)" fill="#e6ecff" opacity="0.78"/><ellipse cx="247.7" cy="612.4" rx="1.900" ry=".95" transform="rotate(-39 247.7 612.4)" fill="#ffffff" opacity="0.68"/><ellipse cx="251.7" cy="609.1" rx="1.900" ry=".95" transform="rotate(-39 251.7 609.1)" fill="#e6ecff" opacity="0.62"/><ellipse cx="255.8" cy="605.8" rx="1.900" ry=".95" transform="rotate(-39 255.8 605.8)" fill="#ffffff" opacity="0.90"/><ellipse cx="259.8" cy="602.5" rx="1.900" ry=".95" transform="rotate(-39 259.8 602.5)" fill="#e6ecff" opacity="0.63"/></g>
<path d="M292.0 574.0 C287.4 578.3 273.0 591.2 264.5 600.0 C256.0 608.8 247.1 617.8 241.0 627.0 C234.9 636.2 231.1 647.5 228.0 655.0 C224.9 662.5 224.0 662.7 222.6 672.0 C221.2 681.3 218.9 697.7 219.4 711.0 C219.9 724.3 222.2 739.5 225.8 752.0 C229.4 764.5 234.5 774.8 240.9 786.0 C247.3 797.2 256.0 808.3 264.5 819.0 C273.0 829.7 287.4 844.8 292.0 850.0Z" fill="#0b36c6"/>
<g fill="none" stroke-linecap="round"><path d="M292.0 436.0 C287.4 439.0 275.5 446.8 264.5 454.0 C253.5 461.2 237.8 469.5 226.0 479.0 C214.2 488.5 202.2 500.3 194.0 511.0 C185.8 521.7 181.0 531.5 176.5 543.0 C172.0 554.5 169.3 567.8 167.0 580.0 C164.7 592.2 163.2 606.0 162.5 616.0 C161.8 626.0 161.9 628.8 162.5 640.0 C163.1 651.2 163.8 668.7 165.8 683.0 C167.8 697.3 170.4 713.2 174.3 726.0 C178.2 738.8 183.3 748.6 189.4 760.0 C195.5 771.4 202.9 783.0 210.8 794.5 C218.7 806.0 227.7 818.4 236.6 829.0 C245.5 839.6 252.9 845.7 264.5 858.0 C276.1 870.3 291.6 890.2 306.0 903.0 C320.4 915.8 338.7 926.8 351.0 935.0 C363.3 943.2 375.2 949.2 380.0 952.0" stroke="#39b8dc" stroke-width="5" opacity=".45" filter="url(#bl1)"/><path d="M292.0 436.0 C287.4 439.0 275.5 446.8 264.5 454.0 C253.5 461.2 237.8 469.5 226.0 479.0 C214.2 488.5 202.2 500.3 194.0 511.0 C185.8 521.7 181.0 531.5 176.5 543.0 C172.0 554.5 169.3 567.8 167.0 580.0 C164.7 592.2 163.2 606.0 162.5 616.0 C161.8 626.0 161.9 628.8 162.5 640.0 C163.1 651.2 163.8 668.7 165.8 683.0 C167.8 697.3 170.4 713.2 174.3 726.0 C178.2 738.8 183.3 748.6 189.4 760.0 C195.5 771.4 202.9 783.0 210.8 794.5 C218.7 806.0 227.7 818.4 236.6 829.0 C245.5 839.6 252.9 845.7 264.5 858.0 C276.1 870.3 291.6 890.2 306.0 903.0 C320.4 915.8 338.7 926.8 351.0 935.0 C363.3 943.2 375.2 949.2 380.0 952.0" stroke="#42c6e2" stroke-width="2.400"/>
<path d="M292.0 506.0 C287.4 508.8 273.7 516.8 264.5 523.0 C255.3 529.2 245.6 534.7 237.0 543.0 C228.4 551.3 219.8 562.3 213.0 573.0 C206.2 583.7 200.5 597.0 196.0 607.0 C191.5 617.0 188.2 625.0 186.0 633.0 C183.8 641.0 183.5 648.5 183.0 655.0 C182.5 661.5 182.7 662.7 183.0 672.0 C183.3 681.3 183.2 698.5 185.0 711.0 C186.8 723.5 190.1 736.0 193.6 747.0 C197.1 758.0 200.9 767.2 206.0 777.0 C211.1 786.8 217.3 796.7 224.0 806.0 C230.7 815.3 239.2 825.3 246.0 833.0 C252.8 840.7 256.8 844.8 264.5 852.0 C272.2 859.2 287.4 872.0 292.0 876.0" stroke="#39b8dc" stroke-width="4.500" opacity=".4" filter="url(#bl1)"/><path d="M292.0 506.0 C287.4 508.8 273.7 516.8 264.5 523.0 C255.3 529.2 245.6 534.7 237.0 543.0 C228.4 551.3 219.8 562.3 213.0 573.0 C206.2 583.7 200.5 597.0 196.0 607.0 C191.5 617.0 188.2 625.0 186.0 633.0 C183.8 641.0 183.5 648.5 183.0 655.0 C182.5 661.5 182.7 662.7 183.0 672.0 C183.3 681.3 183.2 698.5 185.0 711.0 C186.8 723.5 190.1 736.0 193.6 747.0 C197.1 758.0 200.9 767.2 206.0 777.0 C211.1 786.8 217.3 796.7 224.0 806.0 C230.7 815.3 239.2 825.3 246.0 833.0 C252.8 840.7 256.8 844.8 264.5 852.0 C272.2 859.2 287.4 872.0 292.0 876.0" stroke="#41c8e6" stroke-width="2.200"/>
<path d="M292.0 574.0 C287.4 578.3 273.0 591.2 264.5 600.0 C256.0 608.8 247.1 617.8 241.0 627.0 C234.9 636.2 231.1 647.5 228.0 655.0 C224.9 662.5 224.0 662.7 222.6 672.0 C221.2 681.3 218.9 697.7 219.4 711.0 C219.9 724.3 222.2 739.5 225.8 752.0 C229.4 764.5 234.5 774.8 240.9 786.0 C247.3 797.2 256.0 808.3 264.5 819.0 C273.0 829.7 287.4 844.8 292.0 850.0" stroke="#39b8dc" stroke-width="4.500" opacity=".4" filter="url(#bl1)"/><path d="M292.0 574.0 C287.4 578.3 273.0 591.2 264.5 600.0 C256.0 608.8 247.1 617.8 241.0 627.0 C234.9 636.2 231.1 647.5 228.0 655.0 C224.9 662.5 224.0 662.7 222.6 672.0 C221.2 681.3 218.9 697.7 219.4 711.0 C219.9 724.3 222.2 739.5 225.8 752.0 C229.4 764.5 234.5 774.8 240.9 786.0 C247.3 797.2 256.0 808.3 264.5 819.0 C273.0 829.7 287.4 844.8 292.0 850.0" stroke="#3fc4e6" stroke-width="2.200"/></g>
<!-- right side -->
<path d="M1379 249 C1452 266 1534 297 1616 335 L1700 378 L1700 640 L1379 640Z" fill="url(#rp1)"/>
<path d="M1360 240 C1431 300 1493 372 1534 430 C1567 483 1616 552 1690 635 L1690 960 L1360 960Z" fill="url(#rp2)"/>
<path d="M1360 474 C1431 461 1505 455 1556 463 C1580 500 1620 556 1690 637 L1690 960 L1360 960Z" fill="url(#rdark)"/>
<path d="M1350 525 C1440 560 1560 560 1606 600 C1602 700 1570 790 1516 945 L1504 945 C1520 830 1480 700 1421 634 C1400 610 1380 597 1350 580Z" fill="url(#rband)" filter="url(#bl4)"/>
<path d="M1360 585 C1431 634 1481 703 1505 765 C1515 800 1515 880 1509 935 L1360 935Z" fill="#0a1f90"/>
<path d="M1360 240 C1431 300 1493 372 1534 430 C1567 483 1616 552 1690 635" fill="none" stroke="#3cbce6" stroke-width="2.200" opacity=".85"/>
<path d="M1400 935 L1500 800 L1511 935Z" fill="#0d33aa" opacity=".6" filter="url(#bl3)"/><ellipse cx="1512" cy="940" rx="42" ry="150" fill="url(#rfade)"/>
<g><ellipse cx="1392.0" cy="578.0" rx="1.2" ry="2.7" transform="rotate(14 1392.0 578.0)" fill="#a8dcf6" opacity="0.16"/><ellipse cx="1402.5" cy="578.0" rx="1.2" ry="2.7" transform="rotate(14 1402.5 578.0)" fill="#a8dcf6" opacity="0.16"/><ellipse cx="1413.0" cy="578.0" rx="1.2" ry="2.7" transform="rotate(14 1413.0 578.0)" fill="#a8dcf6" opacity="0.16"/><ellipse cx="1423.5" cy="578.0" rx="1.2" ry="2.7" transform="rotate(14 1423.5 578.0)" fill="#a8dcf6" opacity="0.16"/><ellipse cx="1434.0" cy="578.0" rx="1.2" ry="2.7" transform="rotate(14 1434.0 578.0)" fill="#a8dcf6" opacity="0.16"/><ellipse cx="1444.5" cy="578.0" rx="1.2" ry="2.7" transform="rotate(14 1444.5 578.0)" fill="#a8dcf6" opacity="0.16"/><ellipse cx="1455.0" cy="578.0" rx="1.2" ry="2.7" transform="rotate(14 1455.0 578.0)" fill="#a8dcf6" opacity="0.16"/><ellipse cx="1465.5" cy="578.0" rx="1.2" ry="2.7" transform="rotate(14 1465.5 578.0)" fill="#a8dcf6" opacity="0.16"/><ellipse cx="1476.0" cy="578.0" rx="1.2" ry="2.7" transform="rotate(14 1476.0 578.0)" fill="#a8dcf6" opacity="0.16"/><ellipse cx="1486.5" cy="578.0" rx="1.2" ry="2.7" transform="rotate(14 1486.5 578.0)" fill="#a8dcf6" opacity="0.16"/><ellipse cx="1497.0" cy="578.0" rx="1.2" ry="2.7" transform="rotate(14 1497.0 578.0)" fill="#a8dcf6" opacity="0.16"/><ellipse cx="1507.5" cy="578.0" rx="1.2" ry="2.7" transform="rotate(14 1507.5 578.0)" fill="#a8dcf6" opacity="0.16"/><ellipse cx="1518.0" cy="578.0" rx="1.2" ry="2.7" transform="rotate(14 1518.0 578.0)" fill="#a8dcf6" opacity="0.16"/><ellipse cx="1528.5" cy="578.0" rx="1.2" ry="2.7" transform="rotate(14 1528.5 578.0)" fill="#f4c6dc" opacity="0.36"/><ellipse cx="1539.0" cy="578.0" rx="1.2" ry="2.7" transform="rotate(14 1539.0 578.0)" fill="#f4c6dc" opacity="0.36"/><ellipse cx="1549.5" cy="578.0" rx="1.2" ry="2.7" transform="rotate(14 1549.5 578.0)" fill="#f4c6dc" opacity="0.36"/><ellipse cx="1560.0" cy="578.0" rx="1.2" ry="2.7" transform="rotate(14 1560.0 578.0)" fill="#f4c6dc" opacity="0.36"/><ellipse cx="1570.5" cy="578.0" rx="1.2" ry="2.7" transform="rotate(14 1570.5 578.0)" fill="#f4c6dc" opacity="0.36"/><ellipse cx="1581.0" cy="578.0" rx="1.2" ry="2.7" transform="rotate(14 1581.0 578.0)" fill="#f4c6dc" opacity="0.36"/><ellipse cx="1398.1" cy="587.0" rx="1.2" ry="2.7" transform="rotate(14 1398.1 587.0)" fill="#a8dcf6" opacity="0.18"/><ellipse cx="1408.6" cy="587.0" rx="1.2" ry="2.7" transform="rotate(14 1408.6 587.0)" fill="#a8dcf6" opacity="0.18"/><ellipse cx="1419.1" cy="587.0" rx="1.2" ry="2.7" transform="rotate(14 1419.1 587.0)" fill="#a8dcf6" opacity="0.18"/><ellipse cx="1429.6" cy="587.0" rx="1.2" ry="2.7" transform="rotate(14 1429.6 587.0)" fill="#a8dcf6" opacity="0.18"/><ellipse cx="1440.1" cy="587.0" rx="1.2" ry="2.7" transform="rotate(14 1440.1 587.0)" fill="#a8dcf6" opacity="0.18"/><ellipse cx="1450.6" cy="587.0" rx="1.2" ry="2.7" transform="rotate(14 1450.6 587.0)" fill="#a8dcf6" opacity="0.18"/><ellipse cx="1461.1" cy="587.0" rx="1.2" ry="2.7" transform="rotate(14 1461.1 587.0)" fill="#a8dcf6" opacity="0.18"/><ellipse cx="1471.6" cy="587.0" rx="1.2" ry="2.7" transform="rotate(14 1471.6 587.0)" fill="#a8dcf6" opacity="0.18"/><ellipse cx="1482.1" cy="587.0" rx="1.2" ry="2.7" transform="rotate(14 1482.1 587.0)" fill="#a8dcf6" opacity="0.18"/><ellipse cx="1492.6" cy="587.0" rx="1.2" ry="2.7" transform="rotate(14 1492.6 587.0)" fill="#a8dcf6" opacity="0.18"/><ellipse cx="1503.1" cy="587.0" rx="1.2" ry="2.7" transform="rotate(14 1503.1 587.0)" fill="#a8dcf6" opacity="0.18"/><ellipse cx="1513.6" cy="587.0" rx="1.2" ry="2.7" transform="rotate(14 1513.6 587.0)" fill="#a8dcf6" opacity="0.18"/><ellipse cx="1524.1" cy="587.0" rx="1.2" ry="2.7" transform="rotate(14 1524.1 587.0)" fill="#f4c6dc" opacity="0.41"/><ellipse cx="1534.6" cy="587.0" rx="1.2" ry="2.7" transform="rotate(14 1534.6 587.0)" fill="#f4c6dc" opacity="0.41"/><ellipse cx="1545.1" cy="587.0" rx="1.2" ry="2.7" transform="rotate(14 1545.1 587.0)" fill="#f4c6dc" opacity="0.41"/><ellipse cx="1555.6" cy="587.0" rx="1.2" ry="2.7" transform="rotate(14 1555.6 587.0)" fill="#f4c6dc" opacity="0.41"/><ellipse cx="1566.1" cy="587.0" rx="1.2" ry="2.7" transform="rotate(14 1566.1 587.0)" fill="#f4c6dc" opacity="0.41"/><ellipse cx="1576.6" cy="587.0" rx="1.2" ry="2.7" transform="rotate(14 1576.6 587.0)" fill="#f4c6dc" opacity="0.41"/><ellipse cx="1587.1" cy="587.0" rx="1.2" ry="2.7" transform="rotate(14 1587.1 587.0)" fill="#f4c6dc" opacity="0.41"/><ellipse cx="1394.2" cy="596.0" rx="1.2" ry="2.7" transform="rotate(14 1394.2 596.0)" fill="#a8dcf6" opacity="0.19"/><ellipse cx="1404.7" cy="596.0" rx="1.2" ry="2.7" transform="rotate(14 1404.7 596.0)" fill="#a8dcf6" opacity="0.19"/><ellipse cx="1415.2" cy="596.0" rx="1.2" ry="2.7" transform="rotate(14 1415.2 596.0)" fill="#a8dcf6" opacity="0.19"/><ellipse cx="1425.7" cy="596.0" rx="1.2" ry="2.7" transform="rotate(14 1425.7 596.0)" fill="#a8dcf6" opacity="0.19"/><ellipse cx="1436.2" cy="596.0" rx="1.2" ry="2.7" transform="rotate(14 1436.2 596.0)" fill="#a8dcf6" opacity="0.19"/><ellipse cx="1446.7" cy="596.0" rx="1.2" ry="2.7" transform="rotate(14 1446.7 596.0)" fill="#a8dcf6" opacity="0.19"/><ellipse cx="1457.2" cy="596.0" rx="1.2" ry="2.7" transform="rotate(14 1457.2 596.0)" fill="#a8dcf6" opacity="0.19"/><ellipse cx="1467.7" cy="596.0" rx="1.2" ry="2.7" transform="rotate(14 1467.7 596.0)" fill="#a8dcf6" opacity="0.19"/><ellipse cx="1478.2" cy="596.0" rx="1.2" ry="2.7" transform="rotate(14 1478.2 596.0)" fill="#a8dcf6" opacity="0.19"/><ellipse cx="1488.7" cy="596.0" rx="1.2" ry="2.7" transform="rotate(14 1488.7 596.0)" fill="#a8dcf6" opacity="0.19"/><ellipse cx="1499.2" cy="596.0" rx="1.2" ry="2.7" transform="rotate(14 1499.2 596.0)" fill="#a8dcf6" opacity="0.19"/><ellipse cx="1509.7" cy="596.0" rx="1.2" ry="2.7" transform="rotate(14 1509.7 596.0)" fill="#a8dcf6" opacity="0.19"/><ellipse cx="1520.2" cy="596.0" rx="1.2" ry="2.7" transform="rotate(14 1520.2 596.0)" fill="#a8dcf6" opacity="0.19"/><ellipse cx="1530.7" cy="596.0" rx="1.2" ry="2.7" transform="rotate(14 1530.7 596.0)" fill="#f4c6dc" opacity="0.46"/><ellipse cx="1541.2" cy="596.0" rx="1.2" ry="2.7" transform="rotate(14 1541.2 596.0)" fill="#f4c6dc" opacity="0.46"/><ellipse cx="1551.7" cy="596.0" rx="1.2" ry="2.7" transform="rotate(14 1551.7 596.0)" fill="#f4c6dc" opacity="0.46"/><ellipse cx="1562.2" cy="596.0" rx="1.2" ry="2.7" transform="rotate(14 1562.2 596.0)" fill="#f4c6dc" opacity="0.46"/><ellipse cx="1572.7" cy="596.0" rx="1.2" ry="2.7" transform="rotate(14 1572.7 596.0)" fill="#f4c6dc" opacity="0.46"/><ellipse cx="1583.2" cy="596.0" rx="1.2" ry="2.7" transform="rotate(14 1583.2 596.0)" fill="#f4c6dc" opacity="0.46"/><ellipse cx="1410.7" cy="605.0" rx="1.2" ry="2.7" transform="rotate(14 1410.7 605.0)" fill="#a8dcf6" opacity="0.21"/><ellipse cx="1421.2" cy="605.0" rx="1.2" ry="2.7" transform="rotate(14 1421.2 605.0)" fill="#a8dcf6" opacity="0.21"/><ellipse cx="1431.7" cy="605.0" rx="1.2" ry="2.7" transform="rotate(14 1431.7 605.0)" fill="#a8dcf6" opacity="0.21"/><ellipse cx="1442.2" cy="605.0" rx="1.2" ry="2.7" transform="rotate(14 1442.2 605.0)" fill="#a8dcf6" opacity="0.21"/><ellipse cx="1452.7" cy="605.0" rx="1.2" ry="2.7" transform="rotate(14 1452.7 605.0)" fill="#a8dcf6" opacity="0.21"/><ellipse cx="1463.2" cy="605.0" rx="1.2" ry="2.7" transform="rotate(14 1463.2 605.0)" fill="#a8dcf6" opacity="0.21"/><ellipse cx="1473.7" cy="605.0" rx="1.2" ry="2.7" transform="rotate(14 1473.7 605.0)" fill="#a8dcf6" opacity="0.21"/><ellipse cx="1484.2" cy="605.0" rx="1.2" ry="2.7" transform="rotate(14 1484.2 605.0)" fill="#a8dcf6" opacity="0.21"/><ellipse cx="1494.7" cy="605.0" rx="1.2" ry="2.7" transform="rotate(14 1494.7 605.0)" fill="#a8dcf6" opacity="0.21"/><ellipse cx="1505.2" cy="605.0" rx="1.2" ry="2.7" transform="rotate(14 1505.2 605.0)" fill="#a8dcf6" opacity="0.21"/><ellipse cx="1515.7" cy="605.0" rx="1.2" ry="2.7" transform="rotate(14 1515.7 605.0)" fill="#a8dcf6" opacity="0.21"/><ellipse cx="1526.2" cy="605.0" rx="1.2" ry="2.7" transform="rotate(14 1526.2 605.0)" fill="#f4c6dc" opacity="0.51"/><ellipse cx="1536.7" cy="605.0" rx="1.2" ry="2.7" transform="rotate(14 1536.7 605.0)" fill="#f4c6dc" opacity="0.51"/><ellipse cx="1547.2" cy="605.0" rx="1.2" ry="2.7" transform="rotate(14 1547.2 605.0)" fill="#f4c6dc" opacity="0.51"/><ellipse cx="1557.7" cy="605.0" rx="1.2" ry="2.7" transform="rotate(14 1557.7 605.0)" fill="#f4c6dc" opacity="0.51"/><ellipse cx="1568.2" cy="605.0" rx="1.2" ry="2.7" transform="rotate(14 1568.2 605.0)" fill="#f4c6dc" opacity="0.51"/><ellipse cx="1578.7" cy="605.0" rx="1.2" ry="2.7" transform="rotate(14 1578.7 605.0)" fill="#f4c6dc" opacity="0.51"/><ellipse cx="1589.2" cy="605.0" rx="1.2" ry="2.7" transform="rotate(14 1589.2 605.0)" fill="#f4c6dc" opacity="0.51"/><ellipse cx="1417.3" cy="614.0" rx="1.2" ry="2.7" transform="rotate(14 1417.3 614.0)" fill="#a8dcf6" opacity="0.23"/><ellipse cx="1427.8" cy="614.0" rx="1.2" ry="2.7" transform="rotate(14 1427.8 614.0)" fill="#a8dcf6" opacity="0.23"/><ellipse cx="1438.3" cy="614.0" rx="1.2" ry="2.7" transform="rotate(14 1438.3 614.0)" fill="#a8dcf6" opacity="0.23"/><ellipse cx="1448.8" cy="614.0" rx="1.2" ry="2.7" transform="rotate(14 1448.8 614.0)" fill="#a8dcf6" opacity="0.23"/><ellipse cx="1459.3" cy="614.0" rx="1.2" ry="2.7" transform="rotate(14 1459.3 614.0)" fill="#a8dcf6" opacity="0.23"/><ellipse cx="1469.8" cy="614.0" rx="1.2" ry="2.7" transform="rotate(14 1469.8 614.0)" fill="#a8dcf6" opacity="0.23"/><ellipse cx="1480.3" cy="614.0" rx="1.2" ry="2.7" transform="rotate(14 1480.3 614.0)" fill="#a8dcf6" opacity="0.23"/><ellipse cx="1490.8" cy="614.0" rx="1.2" ry="2.7" transform="rotate(14 1490.8 614.0)" fill="#a8dcf6" opacity="0.23"/><ellipse cx="1501.3" cy="614.0" rx="1.2" ry="2.7" transform="rotate(14 1501.3 614.0)" fill="#a8dcf6" opacity="0.23"/><ellipse cx="1511.8" cy="614.0" rx="1.2" ry="2.7" transform="rotate(14 1511.8 614.0)" fill="#a8dcf6" opacity="0.23"/><ellipse cx="1522.3" cy="614.0" rx="1.2" ry="2.7" transform="rotate(14 1522.3 614.0)" fill="#a8dcf6" opacity="0.23"/><ellipse cx="1532.8" cy="614.0" rx="1.2" ry="2.7" transform="rotate(14 1532.8 614.0)" fill="#f4c6dc" opacity="0.56"/><ellipse cx="1543.3" cy="614.0" rx="1.2" ry="2.7" transform="rotate(14 1543.3 614.0)" fill="#f4c6dc" opacity="0.56"/><ellipse cx="1553.8" cy="614.0" rx="1.2" ry="2.7" transform="rotate(14 1553.8 614.0)" fill="#f4c6dc" opacity="0.56"/><ellipse cx="1564.3" cy="614.0" rx="1.2" ry="2.7" transform="rotate(14 1564.3 614.0)" fill="#f4c6dc" opacity="0.56"/><ellipse cx="1574.8" cy="614.0" rx="1.2" ry="2.7" transform="rotate(14 1574.8 614.0)" fill="#f4c6dc" opacity="0.56"/><ellipse cx="1585.3" cy="614.0" rx="1.2" ry="2.7" transform="rotate(14 1585.3 614.0)" fill="#f4c6dc" opacity="0.56"/><ellipse cx="1433.9" cy="623.0" rx="1.2" ry="2.7" transform="rotate(14 1433.9 623.0)" fill="#a8dcf6" opacity="0.24"/><ellipse cx="1444.4" cy="623.0" rx="1.2" ry="2.7" transform="rotate(14 1444.4 623.0)" fill="#a8dcf6" opacity="0.24"/><ellipse cx="1454.9" cy="623.0" rx="1.2" ry="2.7" transform="rotate(14 1454.9 623.0)" fill="#a8dcf6" opacity="0.24"/><ellipse cx="1465.4" cy="623.0" rx="1.2" ry="2.7" transform="rotate(14 1465.4 623.0)" fill="#a8dcf6" opacity="0.24"/><ellipse cx="1475.9" cy="623.0" rx="1.2" ry="2.7" transform="rotate(14 1475.9 623.0)" fill="#a8dcf6" opacity="0.24"/><ellipse cx="1486.4" cy="623.0" rx="1.2" ry="2.7" transform="rotate(14 1486.4 623.0)" fill="#a8dcf6" opacity="0.24"/><ellipse cx="1496.9" cy="623.0" rx="1.2" ry="2.7" transform="rotate(14 1496.9 623.0)" fill="#a8dcf6" opacity="0.24"/><ellipse cx="1507.4" cy="623.0" rx="1.2" ry="2.7" transform="rotate(14 1507.4 623.0)" fill="#a8dcf6" opacity="0.24"/><ellipse cx="1517.9" cy="623.0" rx="1.2" ry="2.7" transform="rotate(14 1517.9 623.0)" fill="#a8dcf6" opacity="0.24"/><ellipse cx="1528.4" cy="623.0" rx="1.2" ry="2.7" transform="rotate(14 1528.4 623.0)" fill="#f4c6dc" opacity="0.61"/><ellipse cx="1538.9" cy="623.0" rx="1.2" ry="2.7" transform="rotate(14 1538.9 623.0)" fill="#f4c6dc" opacity="0.61"/><ellipse cx="1549.4" cy="623.0" rx="1.2" ry="2.7" transform="rotate(14 1549.4 623.0)" fill="#f4c6dc" opacity="0.61"/><ellipse cx="1559.9" cy="623.0" rx="1.2" ry="2.7" transform="rotate(14 1559.9 623.0)" fill="#f4c6dc" opacity="0.61"/><ellipse cx="1570.4" cy="623.0" rx="1.2" ry="2.7" transform="rotate(14 1570.4 623.0)" fill="#f4c6dc" opacity="0.61"/><ellipse cx="1580.9" cy="623.0" rx="1.2" ry="2.7" transform="rotate(14 1580.9 623.0)" fill="#f4c6dc" opacity="0.61"/><ellipse cx="1440.5" cy="632.0" rx="1.2" ry="2.7" transform="rotate(14 1440.5 632.0)" fill="#a8dcf6" opacity="0.26"/><ellipse cx="1451.0" cy="632.0" rx="1.2" ry="2.7" transform="rotate(14 1451.0 632.0)" fill="#a8dcf6" opacity="0.26"/><ellipse cx="1461.5" cy="632.0" rx="1.2" ry="2.7" transform="rotate(14 1461.5 632.0)" fill="#a8dcf6" opacity="0.26"/><ellipse cx="1472.0" cy="632.0" rx="1.2" ry="2.7" transform="rotate(14 1472.0 632.0)" fill="#a8dcf6" opacity="0.26"/><ellipse cx="1482.5" cy="632.0" rx="1.2" ry="2.7" transform="rotate(14 1482.5 632.0)" fill="#a8dcf6" opacity="0.26"/><ellipse cx="1493.0" cy="632.0" rx="1.2" ry="2.7" transform="rotate(14 1493.0 632.0)" fill="#a8dcf6" opacity="0.26"/><ellipse cx="1503.5" cy="632.0" rx="1.2" ry="2.7" transform="rotate(14 1503.5 632.0)" fill="#a8dcf6" opacity="0.26"/><ellipse cx="1514.0" cy="632.0" rx="1.2" ry="2.7" transform="rotate(14 1514.0 632.0)" fill="#a8dcf6" opacity="0.26"/><ellipse cx="1524.5" cy="632.0" rx="1.2" ry="2.7" transform="rotate(14 1524.5 632.0)" fill="#f4c6dc" opacity="0.66"/><ellipse cx="1535.0" cy="632.0" rx="1.2" ry="2.7" transform="rotate(14 1535.0 632.0)" fill="#f4c6dc" opacity="0.66"/><ellipse cx="1545.5" cy="632.0" rx="1.2" ry="2.7" transform="rotate(14 1545.5 632.0)" fill="#f4c6dc" opacity="0.66"/><ellipse cx="1556.0" cy="632.0" rx="1.2" ry="2.7" transform="rotate(14 1556.0 632.0)" fill="#f4c6dc" opacity="0.66"/><ellipse cx="1566.5" cy="632.0" rx="1.2" ry="2.7" transform="rotate(14 1566.5 632.0)" fill="#f4c6dc" opacity="0.66"/><ellipse cx="1577.0" cy="632.0" rx="1.2" ry="2.7" transform="rotate(14 1577.0 632.0)" fill="#f4c6dc" opacity="0.66"/><ellipse cx="1587.5" cy="632.0" rx="1.2" ry="2.7" transform="rotate(14 1587.5 632.0)" fill="#f4c6dc" opacity="0.66"/><ellipse cx="1446.6" cy="641.0" rx="1.2" ry="2.7" transform="rotate(14 1446.6 641.0)" fill="#a8dcf6" opacity="0.28"/><ellipse cx="1457.1" cy="641.0" rx="1.2" ry="2.7" transform="rotate(14 1457.1 641.0)" fill="#a8dcf6" opacity="0.28"/><ellipse cx="1467.6" cy="641.0" rx="1.2" ry="2.7" transform="rotate(14 1467.6 641.0)" fill="#a8dcf6" opacity="0.28"/><ellipse cx="1478.1" cy="641.0" rx="1.2" ry="2.7" transform="rotate(14 1478.1 641.0)" fill="#a8dcf6" opacity="0.28"/><ellipse cx="1488.6" cy="641.0" rx="1.2" ry="2.7" transform="rotate(14 1488.6 641.0)" fill="#a8dcf6" opacity="0.28"/><ellipse cx="1499.1" cy="641.0" rx="1.2" ry="2.7" transform="rotate(14 1499.1 641.0)" fill="#a8dcf6" opacity="0.28"/><ellipse cx="1509.6" cy="641.0" rx="1.2" ry="2.7" transform="rotate(14 1509.6 641.0)" fill="#a8dcf6" opacity="0.28"/><ellipse cx="1520.1" cy="641.0" rx="1.2" ry="2.7" transform="rotate(14 1520.1 641.0)" fill="#a8dcf6" opacity="0.28"/><ellipse cx="1530.6" cy="641.0" rx="1.2" ry="2.7" transform="rotate(14 1530.6 641.0)" fill="#f4c6dc" opacity="0.71"/><ellipse cx="1541.1" cy="641.0" rx="1.2" ry="2.7" transform="rotate(14 1541.1 641.0)" fill="#f4c6dc" opacity="0.71"/><ellipse cx="1551.6" cy="641.0" rx="1.2" ry="2.7" transform="rotate(14 1551.6 641.0)" fill="#f4c6dc" opacity="0.71"/><ellipse cx="1562.1" cy="641.0" rx="1.2" ry="2.7" transform="rotate(14 1562.1 641.0)" fill="#f4c6dc" opacity="0.71"/><ellipse cx="1572.6" cy="641.0" rx="1.2" ry="2.7" transform="rotate(14 1572.6 641.0)" fill="#f4c6dc" opacity="0.71"/><ellipse cx="1583.1" cy="641.0" rx="1.2" ry="2.7" transform="rotate(14 1583.1 641.0)" fill="#f4c6dc" opacity="0.71"/><ellipse cx="1453.1" cy="650.0" rx="1.2" ry="2.7" transform="rotate(14 1453.1 650.0)" fill="#a8dcf6" opacity="0.29"/><ellipse cx="1463.6" cy="650.0" rx="1.2" ry="2.7" transform="rotate(14 1463.6 650.0)" fill="#a8dcf6" opacity="0.29"/><ellipse cx="1474.1" cy="650.0" rx="1.2" ry="2.7" transform="rotate(14 1474.1 650.0)" fill="#a8dcf6" opacity="0.29"/><ellipse cx="1484.6" cy="650.0" rx="1.2" ry="2.7" transform="rotate(14 1484.6 650.0)" fill="#a8dcf6" opacity="0.29"/><ellipse cx="1495.1" cy="650.0" rx="1.2" ry="2.7" transform="rotate(14 1495.1 650.0)" fill="#a8dcf6" opacity="0.29"/><ellipse cx="1505.6" cy="650.0" rx="1.2" ry="2.7" transform="rotate(14 1505.6 650.0)" fill="#a8dcf6" opacity="0.29"/><ellipse cx="1516.1" cy="650.0" rx="1.2" ry="2.7" transform="rotate(14 1516.1 650.0)" fill="#a8dcf6" opacity="0.29"/><ellipse cx="1526.6" cy="650.0" rx="1.2" ry="2.7" transform="rotate(14 1526.6 650.0)" fill="#f4c6dc" opacity="0.77"/><ellipse cx="1537.1" cy="650.0" rx="1.2" ry="2.7" transform="rotate(14 1537.1 650.0)" fill="#f4c6dc" opacity="0.77"/><ellipse cx="1547.6" cy="650.0" rx="1.2" ry="2.7" transform="rotate(14 1547.6 650.0)" fill="#f4c6dc" opacity="0.77"/><ellipse cx="1558.1" cy="650.0" rx="1.2" ry="2.7" transform="rotate(14 1558.1 650.0)" fill="#f4c6dc" opacity="0.77"/><ellipse cx="1568.6" cy="650.0" rx="1.2" ry="2.7" transform="rotate(14 1568.6 650.0)" fill="#f4c6dc" opacity="0.77"/><ellipse cx="1579.1" cy="650.0" rx="1.2" ry="2.7" transform="rotate(14 1579.1 650.0)" fill="#f4c6dc" opacity="0.77"/><ellipse cx="1589.6" cy="650.0" rx="1.2" ry="2.7" transform="rotate(14 1589.6 650.0)" fill="#f4c6dc" opacity="0.77"/><ellipse cx="1459.2" cy="659.0" rx="1.2" ry="2.7" transform="rotate(14 1459.2 659.0)" fill="#a8dcf6" opacity="0.31"/><ellipse cx="1469.7" cy="659.0" rx="1.2" ry="2.7" transform="rotate(14 1469.7 659.0)" fill="#a8dcf6" opacity="0.31"/><ellipse cx="1480.2" cy="659.0" rx="1.2" ry="2.7" transform="rotate(14 1480.2 659.0)" fill="#a8dcf6" opacity="0.31"/><ellipse cx="1490.7" cy="659.0" rx="1.2" ry="2.7" transform="rotate(14 1490.7 659.0)" fill="#a8dcf6" opacity="0.31"/><ellipse cx="1501.2" cy="659.0" rx="1.2" ry="2.7" transform="rotate(14 1501.2 659.0)" fill="#a8dcf6" opacity="0.31"/><ellipse cx="1511.7" cy="659.0" rx="1.2" ry="2.7" transform="rotate(14 1511.7 659.0)" fill="#a8dcf6" opacity="0.31"/><ellipse cx="1522.2" cy="659.0" rx="1.2" ry="2.7" transform="rotate(14 1522.2 659.0)" fill="#a8dcf6" opacity="0.31"/><ellipse cx="1532.7" cy="659.0" rx="1.2" ry="2.7" transform="rotate(14 1532.7 659.0)" fill="#f4c6dc" opacity="0.82"/><ellipse cx="1543.2" cy="659.0" rx="1.2" ry="2.7" transform="rotate(14 1543.2 659.0)" fill="#f4c6dc" opacity="0.82"/><ellipse cx="1553.7" cy="659.0" rx="1.2" ry="2.7" transform="rotate(14 1553.7 659.0)" fill="#f4c6dc" opacity="0.82"/><ellipse cx="1564.2" cy="659.0" rx="1.2" ry="2.7" transform="rotate(14 1564.2 659.0)" fill="#f4c6dc" opacity="0.82"/><ellipse cx="1574.7" cy="659.0" rx="1.2" ry="2.7" transform="rotate(14 1574.7 659.0)" fill="#f4c6dc" opacity="0.82"/><ellipse cx="1585.2" cy="659.0" rx="1.2" ry="2.7" transform="rotate(14 1585.2 659.0)" fill="#f4c6dc" opacity="0.82"/><ellipse cx="1465.8" cy="668.0" rx="1.2" ry="2.7" transform="rotate(14 1465.8 668.0)" fill="#a8dcf6" opacity="0.33"/><ellipse cx="1476.3" cy="668.0" rx="1.2" ry="2.7" transform="rotate(14 1476.3 668.0)" fill="#a8dcf6" opacity="0.33"/><ellipse cx="1486.8" cy="668.0" rx="1.2" ry="2.7" transform="rotate(14 1486.8 668.0)" fill="#a8dcf6" opacity="0.33"/><ellipse cx="1497.3" cy="668.0" rx="1.2" ry="2.7" transform="rotate(14 1497.3 668.0)" fill="#a8dcf6" opacity="0.33"/><ellipse cx="1507.8" cy="668.0" rx="1.2" ry="2.7" transform="rotate(14 1507.8 668.0)" fill="#a8dcf6" opacity="0.33"/><ellipse cx="1518.3" cy="668.0" rx="1.2" ry="2.7" transform="rotate(14 1518.3 668.0)" fill="#a8dcf6" opacity="0.33"/><ellipse cx="1528.8" cy="668.0" rx="1.2" ry="2.7" transform="rotate(14 1528.8 668.0)" fill="#f4c6dc" opacity="0.83"/><ellipse cx="1539.3" cy="668.0" rx="1.2" ry="2.7" transform="rotate(14 1539.3 668.0)" fill="#f4c6dc" opacity="0.83"/><ellipse cx="1549.8" cy="668.0" rx="1.2" ry="2.7" transform="rotate(14 1549.8 668.0)" fill="#f4c6dc" opacity="0.83"/><ellipse cx="1560.3" cy="668.0" rx="1.2" ry="2.7" transform="rotate(14 1560.3 668.0)" fill="#f4c6dc" opacity="0.83"/><ellipse cx="1570.8" cy="668.0" rx="1.2" ry="2.7" transform="rotate(14 1570.8 668.0)" fill="#f4c6dc" opacity="0.83"/><ellipse cx="1581.3" cy="668.0" rx="1.2" ry="2.7" transform="rotate(14 1581.3 668.0)" fill="#f4c6dc" opacity="0.83"/><ellipse cx="1471.9" cy="677.0" rx="1.2" ry="2.7" transform="rotate(14 1471.9 677.0)" fill="#a8dcf6" opacity="0.34"/><ellipse cx="1482.4" cy="677.0" rx="1.2" ry="2.7" transform="rotate(14 1482.4 677.0)" fill="#a8dcf6" opacity="0.34"/><ellipse cx="1492.9" cy="677.0" rx="1.2" ry="2.7" transform="rotate(14 1492.9 677.0)" fill="#a8dcf6" opacity="0.34"/><ellipse cx="1503.4" cy="677.0" rx="1.2" ry="2.7" transform="rotate(14 1503.4 677.0)" fill="#a8dcf6" opacity="0.34"/><ellipse cx="1513.9" cy="677.0" rx="1.2" ry="2.7" transform="rotate(14 1513.9 677.0)" fill="#a8dcf6" opacity="0.34"/><ellipse cx="1524.4" cy="677.0" rx="1.2" ry="2.7" transform="rotate(14 1524.4 677.0)" fill="#f4c6dc" opacity="0.78"/><ellipse cx="1534.9" cy="677.0" rx="1.2" ry="2.7" transform="rotate(14 1534.9 677.0)" fill="#f4c6dc" opacity="0.78"/><ellipse cx="1545.4" cy="677.0" rx="1.2" ry="2.7" transform="rotate(14 1545.4 677.0)" fill="#f4c6dc" opacity="0.78"/><ellipse cx="1555.9" cy="677.0" rx="1.2" ry="2.7" transform="rotate(14 1555.9 677.0)" fill="#f4c6dc" opacity="0.78"/><ellipse cx="1566.4" cy="677.0" rx="1.2" ry="2.7" transform="rotate(14 1566.4 677.0)" fill="#f4c6dc" opacity="0.78"/><ellipse cx="1576.9" cy="677.0" rx="1.2" ry="2.7" transform="rotate(14 1576.9 677.0)" fill="#f4c6dc" opacity="0.78"/><ellipse cx="1478.5" cy="686.0" rx="1.2" ry="2.7" transform="rotate(14 1478.5 686.0)" fill="#a8dcf6" opacity="0.36"/><ellipse cx="1489.0" cy="686.0" rx="1.2" ry="2.7" transform="rotate(14 1489.0 686.0)" fill="#a8dcf6" opacity="0.36"/><ellipse cx="1499.5" cy="686.0" rx="1.2" ry="2.7" transform="rotate(14 1499.5 686.0)" fill="#a8dcf6" opacity="0.36"/><ellipse cx="1510.0" cy="686.0" rx="1.2" ry="2.7" transform="rotate(14 1510.0 686.0)" fill="#a8dcf6" opacity="0.36"/><ellipse cx="1520.5" cy="686.0" rx="1.2" ry="2.7" transform="rotate(14 1520.5 686.0)" fill="#a8dcf6" opacity="0.36"/><ellipse cx="1531.0" cy="686.0" rx="1.2" ry="2.7" transform="rotate(14 1531.0 686.0)" fill="#f4c6dc" opacity="0.73"/><ellipse cx="1541.5" cy="686.0" rx="1.2" ry="2.7" transform="rotate(14 1541.5 686.0)" fill="#f4c6dc" opacity="0.73"/><ellipse cx="1552.0" cy="686.0" rx="1.2" ry="2.7" transform="rotate(14 1552.0 686.0)" fill="#f4c6dc" opacity="0.73"/><ellipse cx="1562.5" cy="686.0" rx="1.2" ry="2.7" transform="rotate(14 1562.5 686.0)" fill="#f4c6dc" opacity="0.73"/><ellipse cx="1573.0" cy="686.0" rx="1.2" ry="2.7" transform="rotate(14 1573.0 686.0)" fill="#f4c6dc" opacity="0.73"/><ellipse cx="1484.5" cy="695.0" rx="1.2" ry="2.7" transform="rotate(14 1484.5 695.0)" fill="#a8dcf6" opacity="0.37"/><ellipse cx="1495.0" cy="695.0" rx="1.2" ry="2.7" transform="rotate(14 1495.0 695.0)" fill="#a8dcf6" opacity="0.37"/><ellipse cx="1505.5" cy="695.0" rx="1.2" ry="2.7" transform="rotate(14 1505.5 695.0)" fill="#a8dcf6" opacity="0.37"/><ellipse cx="1516.0" cy="695.0" rx="1.2" ry="2.7" transform="rotate(14 1516.0 695.0)" fill="#a8dcf6" opacity="0.37"/><ellipse cx="1526.5" cy="695.0" rx="1.2" ry="2.7" transform="rotate(14 1526.5 695.0)" fill="#f4c6dc" opacity="0.68"/><ellipse cx="1537.0" cy="695.0" rx="1.2" ry="2.7" transform="rotate(14 1537.0 695.0)" fill="#f4c6dc" opacity="0.68"/><ellipse cx="1547.5" cy="695.0" rx="1.2" ry="2.7" transform="rotate(14 1547.5 695.0)" fill="#f4c6dc" opacity="0.68"/><ellipse cx="1558.0" cy="695.0" rx="1.2" ry="2.7" transform="rotate(14 1558.0 695.0)" fill="#f4c6dc" opacity="0.68"/><ellipse cx="1568.5" cy="695.0" rx="1.2" ry="2.7" transform="rotate(14 1568.5 695.0)" fill="#f4c6dc" opacity="0.68"/><ellipse cx="1491.1" cy="704.0" rx="1.2" ry="2.7" transform="rotate(14 1491.1 704.0)" fill="#a8dcf6" opacity="0.39"/><ellipse cx="1501.6" cy="704.0" rx="1.2" ry="2.7" transform="rotate(14 1501.6 704.0)" fill="#a8dcf6" opacity="0.39"/><ellipse cx="1512.1" cy="704.0" rx="1.2" ry="2.7" transform="rotate(14 1512.1 704.0)" fill="#a8dcf6" opacity="0.39"/><ellipse cx="1522.6" cy="704.0" rx="1.2" ry="2.7" transform="rotate(14 1522.6 704.0)" fill="#a8dcf6" opacity="0.39"/><ellipse cx="1533.1" cy="704.0" rx="1.2" ry="2.7" transform="rotate(14 1533.1 704.0)" fill="#f4c6dc" opacity="0.63"/><ellipse cx="1543.6" cy="704.0" rx="1.2" ry="2.7" transform="rotate(14 1543.6 704.0)" fill="#f4c6dc" opacity="0.63"/><ellipse cx="1554.1" cy="704.0" rx="1.2" ry="2.7" transform="rotate(14 1554.1 704.0)" fill="#f4c6dc" opacity="0.63"/><ellipse cx="1564.6" cy="704.0" rx="1.2" ry="2.7" transform="rotate(14 1564.6 704.0)" fill="#f4c6dc" opacity="0.63"/><ellipse cx="1497.2" cy="713.0" rx="1.2" ry="2.7" transform="rotate(14 1497.2 713.0)" fill="#a8dcf6" opacity="0.41"/><ellipse cx="1507.7" cy="713.0" rx="1.2" ry="2.7" transform="rotate(14 1507.7 713.0)" fill="#a8dcf6" opacity="0.41"/><ellipse cx="1518.2" cy="713.0" rx="1.2" ry="2.7" transform="rotate(14 1518.2 713.0)" fill="#a8dcf6" opacity="0.41"/><ellipse cx="1528.7" cy="713.0" rx="1.2" ry="2.7" transform="rotate(14 1528.7 713.0)" fill="#f4c6dc" opacity="0.58"/><ellipse cx="1539.2" cy="713.0" rx="1.2" ry="2.7" transform="rotate(14 1539.2 713.0)" fill="#f4c6dc" opacity="0.58"/><ellipse cx="1549.7" cy="713.0" rx="1.2" ry="2.7" transform="rotate(14 1549.7 713.0)" fill="#f4c6dc" opacity="0.58"/><ellipse cx="1560.2" cy="713.0" rx="1.2" ry="2.7" transform="rotate(14 1560.2 713.0)" fill="#f4c6dc" opacity="0.58"/><ellipse cx="1570.7" cy="713.0" rx="1.2" ry="2.7" transform="rotate(14 1570.7 713.0)" fill="#f4c6dc" opacity="0.58"/><ellipse cx="1503.8" cy="722.0" rx="1.2" ry="2.7" transform="rotate(14 1503.8 722.0)" fill="#a8dcf6" opacity="0.42"/><ellipse cx="1514.3" cy="722.0" rx="1.2" ry="2.7" transform="rotate(14 1514.3 722.0)" fill="#a8dcf6" opacity="0.42"/><ellipse cx="1524.8" cy="722.0" rx="1.2" ry="2.7" transform="rotate(14 1524.8 722.0)" fill="#a8dcf6" opacity="0.42"/><ellipse cx="1535.3" cy="722.0" rx="1.2" ry="2.7" transform="rotate(14 1535.3 722.0)" fill="#f4c6dc" opacity="0.53"/><ellipse cx="1545.8" cy="722.0" rx="1.2" ry="2.7" transform="rotate(14 1545.8 722.0)" fill="#f4c6dc" opacity="0.53"/><ellipse cx="1556.3" cy="722.0" rx="1.2" ry="2.7" transform="rotate(14 1556.3 722.0)" fill="#f4c6dc" opacity="0.53"/><ellipse cx="1566.8" cy="722.0" rx="1.2" ry="2.7" transform="rotate(14 1566.8 722.0)" fill="#f4c6dc" opacity="0.53"/><ellipse cx="1499.4" cy="731.0" rx="1.2" ry="2.7" transform="rotate(14 1499.4 731.0)" fill="#a8dcf6" opacity="0.40"/><ellipse cx="1509.9" cy="731.0" rx="1.2" ry="2.7" transform="rotate(14 1509.9 731.0)" fill="#a8dcf6" opacity="0.40"/><ellipse cx="1520.4" cy="731.0" rx="1.2" ry="2.7" transform="rotate(14 1520.4 731.0)" fill="#a8dcf6" opacity="0.40"/><ellipse cx="1530.9" cy="731.0" rx="1.2" ry="2.7" transform="rotate(14 1530.9 731.0)" fill="#f4c6dc" opacity="0.48"/><ellipse cx="1541.4" cy="731.0" rx="1.2" ry="2.7" transform="rotate(14 1541.4 731.0)" fill="#f4c6dc" opacity="0.48"/><ellipse cx="1551.9" cy="731.0" rx="1.2" ry="2.7" transform="rotate(14 1551.9 731.0)" fill="#f4c6dc" opacity="0.48"/><ellipse cx="1562.4" cy="731.0" rx="1.2" ry="2.7" transform="rotate(14 1562.4 731.0)" fill="#f4c6dc" opacity="0.48"/><ellipse cx="1505.9" cy="740.0" rx="1.2" ry="2.7" transform="rotate(14 1505.9 740.0)" fill="#a8dcf6" opacity="0.38"/><ellipse cx="1516.4" cy="740.0" rx="1.2" ry="2.7" transform="rotate(14 1516.4 740.0)" fill="#a8dcf6" opacity="0.38"/><ellipse cx="1526.9" cy="740.0" rx="1.2" ry="2.7" transform="rotate(14 1526.9 740.0)" fill="#f4c6dc" opacity="0.42"/><ellipse cx="1537.4" cy="740.0" rx="1.2" ry="2.7" transform="rotate(14 1537.4 740.0)" fill="#f4c6dc" opacity="0.42"/><ellipse cx="1547.9" cy="740.0" rx="1.2" ry="2.7" transform="rotate(14 1547.9 740.0)" fill="#f4c6dc" opacity="0.42"/><ellipse cx="1558.4" cy="740.0" rx="1.2" ry="2.7" transform="rotate(14 1558.4 740.0)" fill="#f4c6dc" opacity="0.42"/><ellipse cx="1512.0" cy="749.0" rx="1.2" ry="2.7" transform="rotate(14 1512.0 749.0)" fill="#a8dcf6" opacity="0.37"/><ellipse cx="1522.5" cy="749.0" rx="1.2" ry="2.7" transform="rotate(14 1522.5 749.0)" fill="#a8dcf6" opacity="0.37"/><ellipse cx="1533.0" cy="749.0" rx="1.2" ry="2.7" transform="rotate(14 1533.0 749.0)" fill="#f4c6dc" opacity="0.37"/><ellipse cx="1543.5" cy="749.0" rx="1.2" ry="2.7" transform="rotate(14 1543.5 749.0)" fill="#f4c6dc" opacity="0.37"/><ellipse cx="1554.0" cy="749.0" rx="1.2" ry="2.7" transform="rotate(14 1554.0 749.0)" fill="#f4c6dc" opacity="0.37"/><ellipse cx="1518.6" cy="758.0" rx="1.2" ry="2.7" transform="rotate(14 1518.6 758.0)" fill="#a8dcf6" opacity="0.35"/><ellipse cx="1529.1" cy="758.0" rx="1.2" ry="2.7" transform="rotate(14 1529.1 758.0)" fill="#f4c6dc" opacity="0.32"/><ellipse cx="1539.6" cy="758.0" rx="1.2" ry="2.7" transform="rotate(14 1539.6 758.0)" fill="#f4c6dc" opacity="0.32"/><ellipse cx="1550.1" cy="758.0" rx="1.2" ry="2.7" transform="rotate(14 1550.1 758.0)" fill="#f4c6dc" opacity="0.32"/><ellipse cx="1514.2" cy="767.0" rx="1.2" ry="2.7" transform="rotate(14 1514.2 767.0)" fill="#a8dcf6" opacity="0.33"/><ellipse cx="1524.7" cy="767.0" rx="1.2" ry="2.7" transform="rotate(14 1524.7 767.0)" fill="#a8dcf6" opacity="0.33"/><ellipse cx="1535.2" cy="767.0" rx="1.2" ry="2.7" transform="rotate(14 1535.2 767.0)" fill="#f4c6dc" opacity="0.27"/><ellipse cx="1545.7" cy="767.0" rx="1.2" ry="2.7" transform="rotate(14 1545.7 767.0)" fill="#f4c6dc" opacity="0.27"/><ellipse cx="1520.8" cy="776.0" rx="1.2" ry="2.7" transform="rotate(14 1520.8 776.0)" fill="#a8dcf6" opacity="0.32"/><ellipse cx="1531.3" cy="776.0" rx="1.2" ry="2.7" transform="rotate(14 1531.3 776.0)" fill="#f4c6dc" opacity="0.22"/><ellipse cx="1541.8" cy="776.0" rx="1.2" ry="2.7" transform="rotate(14 1541.8 776.0)" fill="#f4c6dc" opacity="0.22"/><ellipse cx="1552.3" cy="776.0" rx="1.2" ry="2.7" transform="rotate(14 1552.3 776.0)" fill="#f4c6dc" opacity="0.22"/><ellipse cx="1516.3" cy="785.0" rx="1.2" ry="2.7" transform="rotate(14 1516.3 785.0)" fill="#a8dcf6" opacity="0.30"/><ellipse cx="1526.8" cy="785.0" rx="1.2" ry="2.7" transform="rotate(14 1526.8 785.0)" fill="#f4c6dc" opacity="0.17"/><ellipse cx="1537.3" cy="785.0" rx="1.2" ry="2.7" transform="rotate(14 1537.3 785.0)" fill="#f4c6dc" opacity="0.17"/><ellipse cx="1547.8" cy="785.0" rx="1.2" ry="2.7" transform="rotate(14 1547.8 785.0)" fill="#f4c6dc" opacity="0.17"/><ellipse cx="1522.9" cy="794.0" rx="1.2" ry="2.7" transform="rotate(14 1522.9 794.0)" fill="#a8dcf6" opacity="0.28"/><ellipse cx="1533.4" cy="794.0" rx="1.2" ry="2.7" transform="rotate(14 1533.4 794.0)" fill="#f4c6dc" opacity="0.12"/><ellipse cx="1543.9" cy="794.0" rx="1.2" ry="2.7" transform="rotate(14 1543.9 794.0)" fill="#f4c6dc" opacity="0.12"/><ellipse cx="1518.5" cy="803.0" rx="1.2" ry="2.7" transform="rotate(14 1518.5 803.0)" fill="#a8dcf6" opacity="0.27"/><ellipse cx="1529.0" cy="803.0" rx="1.2" ry="2.7" transform="rotate(14 1529.0 803.0)" fill="#f4c6dc" opacity="0.07"/><ellipse cx="1539.5" cy="803.0" rx="1.2" ry="2.7" transform="rotate(14 1539.5 803.0)" fill="#f4c6dc" opacity="0.07"/><ellipse cx="1525.1" cy="812.0" rx="1.2" ry="2.7" transform="rotate(14 1525.1 812.0)" fill="#a8dcf6" opacity="0.25"/><ellipse cx="1520.7" cy="821.0" rx="1.2" ry="2.7" transform="rotate(14 1520.7 821.0)" fill="#a8dcf6" opacity="0.24"/><ellipse cx="1522.8" cy="839.0" rx="1.2" ry="2.7" transform="rotate(14 1522.8 839.0)" fill="#a8dcf6" opacity="0.20"/><ellipse cx="1525.0" cy="857.0" rx="1.2" ry="2.7" transform="rotate(14 1525.0 857.0)" fill="#a8dcf6" opacity="0.17"/></g>
</svg>
<!-- desktop icons -->
<svg style="position:absolute;left:20px;top:9px" width="40" height="44" viewBox="0 0 40 44">
<defs><linearGradient id="binG" x1="0" y1="0" x2="1" y2="0"><stop offset="0" stop-color="#f4f7fa"/><stop offset=".55" stop-color="#e4eaf0"/><stop offset="1" stop-color="#cfd8e0"/></linearGradient></defs>
<path d="M1.500 1.500 H37 L32.200 42.500 H6.200Z" fill="url(#binG)" fill-opacity=".92"/>
<path d="M1.500 1.500 H37 L36.500 5.500 H2Z" fill="#c9d3dc" fill-opacity=".9"/>
<path d="M5.900 39.800 H32.500 L32.200 42.500 H6.200Z" fill="#b9c3cc"/>
<g fill="#1a8be6" transform="translate(19 22.500) scale(1.100) translate(-20 -21.500)"><path d="M16.200 13.500 L20.500 11.300 L26 13.200 L27.800 17.200 L23.800 19 L22.600 15.700 L19 17.400Z"/><path d="M12.200 19.500 L16.500 21.500 L14.800 25 L18 28 L17.200 30.800 L12 29.800 L9.800 24.500Z" fill="#2a9af0"/><path d="M29.300 21.200 L30.800 25.800 L27.200 30.600 L22.300 31 L20.500 27.500 L24.500 26.500 L26.200 23.800 L24 22.500Z" fill="#1478d4"/></g>
</svg>
<div class="dl" style="left:0;top:59px;width:78px">Recycle Bin</div>
<svg style="position:absolute;left:15px;top:105px" width="49" height="49" viewBox="0 0 256 256"><defs>
<linearGradient id="eA1" x1="63" y1="84" x2="242" y2="84" gradientUnits="userSpaceOnUse"><stop offset="0" stop-color="#0c59a4"/><stop offset="1" stop-color="#114a8b"/></linearGradient>
<linearGradient id="eC1" x1="60" y1="50" x2="120" y2="250" gradientUnits="userSpaceOnUse"><stop offset="0" stop-color="#1b9de2"/><stop offset=".5" stop-color="#1595df"/><stop offset="1" stop-color="#0669bc"/></linearGradient>
<linearGradient id="eE1" x1="10" y1="60" x2="250" y2="110" gradientUnits="userSpaceOnUse"><stop offset="0" stop-color="#33b8f0"/><stop offset=".4" stop-color="#2cc2dc"/><stop offset=".75" stop-color="#3fce80"/><stop offset="1" stop-color="#6bdc3a"/></linearGradient>
</defs>
<path d="M235.7 195.500a93.700 93.700 0 01-10.600 4.700 101.900 101.900 0 01-35.900 6.400c-47.300 0-88.500-32.500-88.500-74.300a31.500 31.500 0 0116.400-27.300c-42.800 1.800-53.800 46.400-53.800 72.500 0 74 68.100 81.400 82.800 81.400 7.900 0 19.800-2.300 27-4.600l1.300-.4a128.300 128.300 0 0066.600-52.800 4 4 0 00-5.300-5.600z" fill="url(#eA1)"/>
<path d="M105.700 241.400a79.200 79.200 0 01-22.700-21.300 80.700 80.700 0 0129.500-120c3.200-1.500 8.500-4.100 15.600-4a32.400 32.400 0 0125.700 13 31.900 31.900 0 016.300 18.700c0-.2 24.500-79.600-80-79.600-43.900 0-80 41.600-80 78.200a130.200 130.200 0 0012.100 56 128 128 0 00156.400 67 75.500 75.500 0 01-62.800-8z" fill="url(#eC1)"/>
<path d="M152.300 148.900c-.9 1-3.400 2.500-3.400 5.600 0 2.600 1.700 5.200 4.800 7.300 14.300 10 41.400 8.600 41.500 8.600a59.600 59.600 0 0030.300-8.300 61.400 61.400 0 0030.400-52.900c.3-22.400-8-37.300-11.300-43.900C223.500 24.100 178 0 128 0A128 128 0 000 126.200c.5-36.500 36.800-66 80-66 3.500 0 23.500.3 42 10 16.300 8.600 24.900 19 30.800 29.300 6.200 10.700 7.300 24.100 7.300 29.500 0 5.300-2.700 13.300-7.800 20z" fill="url(#eE1)"/></svg>
<svg style="position:absolute;left:15px;top:140px" width="13" height="13" viewBox="0 0 13 13"><rect width="13" height="13" fill="#fff"/><path d="M3 10 L9.500 3.500 M4.800 3.300 H9.700 V8.200" fill="none" stroke="#1a7fe0" stroke-width="1.700"/></svg>
<div class="dl" style="left:0;top:157px;width:78px;line-height:15.400px"><span style="letter-spacing:.5px">Microsoft</span><br>Edge</div>
<div id="term">
<div id="tbar">
<svg style="position:absolute;left:7px;top:14px" width="18" height="18" viewBox="0 0 18 18"><path d="M9 1.6 C7.2 3 5 3.7 2.6 3.8 V8.6 C2.6 12.4 5.2 15 9 16.4 C12.8 15 15.400 12.4 15.4 8.600 V3.8 C13 3.7 10.8 3 9 1.6Z" fill="none" stroke="#d0d0d0" stroke-width="1.2" stroke-linejoin="round"/></svg>
<div style="position:absolute;left:23px;top:32px;width:7px;height:7px;background:radial-gradient(circle at 0 0,rgba(12,12,12,0) 6.500px,#0c0c0c 7.500px)"></div><div style="position:absolute;left:271px;top:32px;width:7px;height:7px;background:radial-gradient(circle at 100% 0,rgba(12,12,12,0) 6.500px,#0c0c0c 7.500px)"></div><div id="tab">
<svg style="position:absolute;left:9px;top:10px" width="17" height="13" viewBox="0 0 17 13"><path d="M3 0 H17 L14 13 H0Z" fill="#3b6fe0"/><path d="M4.3 2.800 L9 6.3 L3.600 10.200" fill="none" stroke="#fff" stroke-width="1.5"/><path d="M8.500 10.400 H12.500" stroke="#fff" stroke-width="1.5"/></svg>
<div id="ttl">Administrator: Windows PowerShell</div>
<svg style="position:absolute;left:214px;top:11px" width="10" height="10" viewBox="0 0 10 10"><path d="M.5 .5 L9.500 9.500 M9.500 .5 L.5 9.500" stroke="#fff" stroke-width="1.200"/></svg>
</div>
<svg style="position:absolute;left:286px;top:17px" width="12" height="12" viewBox="0 0 12 12"><path d="M6 0.500 V11.500 M0.500 6 H11.500" stroke="#e6e6e6" stroke-width="1.2"/></svg>
<div style="position:absolute;left:307px;top:10px;width:1px;height:24px;background:#3d3d3d"></div>
<svg style="position:absolute;left:317px;top:20px" width="10" height="7" viewBox="0 0 10 7"><path d="M1 1 L5 5.200 L9 1" fill="none" stroke="#e6e6e6" stroke-width="1.300"/></svg>
<svg style="position:absolute;left:993px;top:18px" width="11" height="2" viewBox="0 0 11 2"><path d="M0 1 H11" stroke="#fff" stroke-width="1.2"/></svg>
<svg style="position:absolute;left:1039px;top:14px" width="11" height="11" viewBox="0 0 11 11"><rect x=".6" y=".6" width="9.800" height="9.800" rx="1.2" fill="none" stroke="#fff" stroke-width="1.2"/></svg>
<svg style="position:absolute;left:1085px;top:14px" width="11" height="11" viewBox="0 0 11 11"><path d="M.5 .5 L10.500 10.500 M10.500 .5 L.5 10.500" stroke="#fff" stroke-width="1.2"/></svg>
</div>
<div id="info">
<svg style="position:absolute;left:16px;top:17px" width="16" height="16" viewBox="0 0 16 16"><circle cx="8" cy="8" r="7.800" fill="#4cc2ff"/><circle cx="8" cy="4.600" r="1" fill="#1a1a1a"/><rect x="7.200" y="6.600" width="1.600" height="5.200" rx=".8" fill="#1a1a1a"/></svg>
<div id="itx">Terminale Windows può essere impostato come applicazione terminale predefinita nelle impostazioni.</div>
<div id="ilk">Apri Impostazioni</div>
<svg style="position:absolute;left:1082px;top:18px" width="12" height="12" viewBox="0 0 12 12"><path d="M.5 .5 L11.500 11.500 M11.500 .5 L.5 11.500" stroke="#fff" stroke-width="1.300"/></svg>
</div>
<div id="sb"></div>
<pre id="out">PS C:\Users\administrator&gt; <span class="y">Set<span class="h">-</span>VMNetworkAdapterVlan</span> <span class="g"><span class="h">-</span>ManagementOS <span class="h">-</span>VMNetworkAdapterName</span> <span class="b">"SMB"</span>     <span class="g"><span class="h">-</span>Access <span class="h">-</span>VlanId</span> <span class="w">30</span>
PS C:\Users\administrator&gt; <span class="y">Set<span class="h">-</span>VMNetworkAdapterVlan</span> <span class="g"><span class="h">-</span>ManagementOS <span class="h">-</span>VMNetworkAdapterName</span> <span class="b">"LiveMig"</span> <span class="g"><span class="h">-</span>Access <span class="h">-</span>VlanId</span> <span class="w">40</span>
PS C:\Users\administrator&gt; <span class="y">Get<span class="h">-</span>VMNetworkAdapterVlan</span> <span class="g"><span class="h">-</span>ManagementOS</span>

VMName VMNetworkAdapterName Mode     VlanList
<span class="d">------</span> <span class="d">--------------------</span> <span class="d">----</span>     <span class="d">--------</span>
       vSwitch<span class="h">-</span>SET          Untagged
       SMB                  Access   30
       LiveMig              Access   40
       Cluster              Access   20


PS C:\Users\administrator&gt; <span class="y">New<span class="h">-</span>NetIPAddress</span> <span class="g"><span class="h">-</span>InterfaceAlias</span> <span class="b">"vEthernet (Cluster)"</span> <span class="g"><span class="h">-</span>IPAddress</span> <span class="w">10.20.0.11</span> <span class="g"><span class="h">-</span>PrefixLength</span> <span class="w">24</span>



IPAddress         : 10.20.0.11
InterfaceIndex    : 28
InterfaceAlias    : vEthernet (Cluster)
AddressFamily     : IPv4
Type              : Unicast
PrefixLength      : 24
PrefixOrigin      : Manual
SuffixOrigin      : Manual
AddressState      : Tentative
ValidLifetime     :
PreferredLifetime :
SkipAsSource      : False
PolicyStore       : ActiveStore

IPAddress         : 10.20.0.11
InterfaceIndex    : 28
InterfaceAlias    : vEthernet (Cluster)
AddressFamily     : IPv4
Type              : Unicast
PrefixLength      : 24
PrefixOrigin      : Manual
SuffixOrigin      : Manual
AddressState      : Invalid</pre>
</div>
<div id="taskbar">
<svg style="position:absolute;left:589.200px;top:12.800px" width="23.400" height="23.400" viewBox="0 0 24 24"><defs><linearGradient id="wg" x1="0" y1="0" x2="1" y2="1"><stop offset="0" stop-color="#45c0f8"/><stop offset="1" stop-color="#0a70d4"/></linearGradient></defs><path d="M0 0 H11.300 V11.300 H0Z M12.700 0 H24 V11.300 H12.700Z M0 12.700 H11.300 V24 H0Z M12.700 12.700 H24 V24 H12.700Z" fill="url(#wg)"/></svg>
<div id="srch"><svg style="position:absolute;left:7.500px;top:5.500px" width="20" height="20" viewBox="0 0 20 20"><circle cx="8.400" cy="8.400" r="5.400" fill="none" stroke="#1c1c1c" stroke-width="1.600"/><path d="M12.300 12.300 L16.500 16.600" stroke="#1c1c1c" stroke-width="1.800" stroke-linecap="round"/></svg><span>Search</span></div>
<!-- task view -->
<svg style="position:absolute;left:857px;top:12px" width="26" height="24" viewBox="0 0 26 24"><defs><linearGradient id="tvg" x1="0" y1="1" x2="1" y2="0"><stop offset="0" stop-color="#a8a8a8"/><stop offset=".7" stop-color="#f4f4f4"/><stop offset="1" stop-color="#ffffff"/></linearGradient></defs><rect x=".5" y="7" width="18" height="15.500" rx="1.500" fill="#161616"/><rect x="7" y=".5" width="17.500" height="16" rx="1.500" fill="url(#tvg)" fill-opacity=".92"/></svg>
<!-- explorer -->
<svg style="position:absolute;left:901px;top:13px" width="26" height="22" viewBox="0 0 26 22"><defs><linearGradient id="fg" x1="0" y1="0" x2="0" y2="1"><stop offset="0" stop-color="#ffd257"/><stop offset="1" stop-color="#f7b916"/></linearGradient></defs><path d="M.5 2 Q.5 .5 2 .5 H8.500 L11 3 H24 Q25.500 3 25.500 4.500 V20 Q25.500 21.500 24 21.500 H2 Q.5 21.500 .5 20Z" fill="#e8a30c"/><path d="M.5 5 H12 L14 3 H24 Q25.500 3 25.500 4.500 V20 Q25.500 21.500 24 21.500 H2 Q.5 21.500 .5 20Z" fill="url(#fg)"/><path d="M4.500 21.500 V17 Q4.500 15 6.500 15 H18.500 Q20.500 15 20.500 17 V21.500Z" fill="#1a82e2"/><path d="M7.500 18 H17.500" stroke="#0f62c0" stroke-width="1.400"/></svg>
<!-- edge -->
<svg style="position:absolute;left:945px;top:12px" width="25" height="25" viewBox="0 0 256 256"><defs>
<linearGradient id="eA2" x1="63" y1="84" x2="242" y2="84" gradientUnits="userSpaceOnUse"><stop offset="0" stop-color="#0c59a4"/><stop offset="1" stop-color="#114a8b"/></linearGradient>
<linearGradient id="eC2" x1="60" y1="50" x2="120" y2="250" gradientUnits="userSpaceOnUse"><stop offset="0" stop-color="#1b9de2"/><stop offset=".5" stop-color="#1595df"/><stop offset="1" stop-color="#0669bc"/></linearGradient>
<linearGradient id="eE2" x1="10" y1="60" x2="250" y2="110" gradientUnits="userSpaceOnUse"><stop offset="0" stop-color="#33b8f0"/><stop offset=".4" stop-color="#2cc2dc"/><stop offset=".75" stop-color="#3fce80"/><stop offset="1" stop-color="#6bdc3a"/></linearGradient>
</defs>
<path d="M235.7 195.500a93.700 93.700 0 01-10.600 4.700 101.900 101.900 0 01-35.900 6.400c-47.300 0-88.500-32.500-88.500-74.300a31.500 31.500 0 0116.400-27.300c-42.800 1.800-53.800 46.400-53.800 72.500 0 74 68.100 81.400 82.800 81.400 7.900 0 19.800-2.300 27-4.600l1.300-.4a128.300 128.300 0 0066.600-52.800 4 4 0 00-5.300-5.600z" fill="url(#eA2)"/>
<path d="M105.700 241.400a79.200 79.200 0 01-22.700-21.300 80.700 80.700 0 0129.500-120c3.200-1.500 8.500-4.100 15.600-4a32.400 32.400 0 0125.700 13 31.900 31.900 0 016.300 18.700c0-.2 24.500-79.600-80-79.600-43.900 0-80 41.600-80 78.200a130.200 130.200 0 0012.100 56 128 128 0 00156.400 67 75.500 75.500 0 01-62.800-8z" fill="url(#eC2)"/>
<path d="M152.300 148.900c-.9 1-3.400 2.500-3.400 5.600 0 2.600 1.700 5.200 4.800 7.300 14.300 10 41.400 8.600 41.500 8.600a59.600 59.600 0 0030.300-8.300 61.400 61.400 0 0030.400-52.900c.3-22.400-8-37.300-11.300-43.900C223.500 24.100 178 0 128 0A128 128 0 000 126.200c.5-36.500 36.800-66 80-66 3.500 0 23.500.3 42 10 16.300 8.600 24.900 19 30.800 29.300 6.200 10.700 7.300 24.100 7.300 29.500 0 5.300-2.700 13.300-7.800 20z" fill="url(#eE2)"/></svg>
<!-- terminal active -->
<div style="position:absolute;left:982px;top:5px;width:39px;height:39px;border-radius:5px;background:#f9f9f9;border:1px solid #e4e4e4"></div>
<svg style="position:absolute;left:989px;top:14px" width="25" height="19" viewBox="0 0 25 19"><rect x=".3" y=".3" width="24.400" height="18.400" rx="1.800" fill="#2c2c2c"/><path d="M.3 3.300 V2 Q.3 .3 2 .3 H23 Q24.700 .3 24.700 2 V3.300Z" fill="#6e6e6e"/><path d="M8.500 .3 H17 V3.300 H8.500Z" fill="#8a8a8a"/><path d="M4 6.500 L9.500 10.500 L4 14.500" fill="none" stroke="#cfcfcf" stroke-width="2"/><path d="M11.500 14.500 H18" stroke="#fff" stroke-width="1.800"/></svg>
<div style="position:absolute;left:994px;top:40px;width:16px;height:3px;border-radius:1.500px;background:#1268d8"></div>
<!-- server manager -->
<svg style="position:absolute;left:1034px;top:12px" width="24" height="24" viewBox="0 0 24 24"><path d="M1 6 L8 1.500 L15 5 V22 L8 23 L1 20Z" fill="#35c3de"/><path d="M1 6 L8 1.500 L15 5 L8 8.500Z" fill="#7fe3f2"/><path d="M8 8.500 L15 5 V22 L8 23Z" fill="#1aa3c6"/><path d="M2.500 9 L6.800 10.800 M2.500 12 L6.800 13.800 M2.500 15 L6.800 16.800 M2.500 18 L6.800 19.800" stroke="#0d6f96" stroke-width="1.300"/><path d="M12 12.500 L17.500 9.500 L23 12 V21.500 L17 23.500 L12 21.500Z" fill="#2dbbd8"/><path d="M12 12.500 L17.500 9.500 L23 12 L17 14.500Z" fill="#8be8f5"/><path d="M17 14.500 L23 12 V21.500 L17 23.500Z" fill="#1796bc"/><path d="M13 15.500 L16 16.700 M13 18 L16 19.200 M13 20.300 L16 21.400" stroke="#0d6f96" stroke-width="1.100"/></svg>
<!-- tray -->
<svg style="position:absolute;left:1520px;top:17px" width="18" height="16" viewBox="0 0 18 16"><path d="M1 3 L4 1.200 L7 3 V11 L4 12.500 L1 11Z" fill="#1b78e2"/><path d="M4 4.500 L7 3 V11 L4 12.500Z" fill="#0f5cc0"/><path d="M6.500 6.200 H12" stroke="#2a8ae6" stroke-width="1.300"/><path d="M10.500 3 L13.500 1.200 L16.800 3 V10 L13.500 11.500 L10.500 10Z" fill="#62d2f6"/><circle cx="13.600" cy="11.800" r="2.700" fill="#fff" stroke="#b01414" stroke-width="1.700"/></svg>
<svg style="position:absolute;left:1552px;top:16px" width="18" height="17" viewBox="0 0 18 17"><g fill="none" stroke="#1a1a1a" stroke-width="1.200"><path d="M11 1 H3 Q1.500 1 1.500 2.500 V11.500 Q1.500 13 3 13 H13.500"/><path d="M5 16 H13 M7 13 V16 M11 13 V16"/><rect x="13.200" y=".8" width="3.600" height="5.200" rx="1.200"/><path d="M15 6 V16.200"/></g></svg>
<svg style="position:absolute;left:1576px;top:17px" width="18" height="15" viewBox="0 0 18 15"><g fill="none" stroke="#1a1a1a" stroke-width="1.150" stroke-linecap="round" stroke-linejoin="round"><path d="M1.200 5 H3.800 L7.200 1.500 V13.500 L3.800 10 H1.200Z"/><path d="M9.500 5.200 Q10.800 7.500 9.500 9.800"/><path d="M11.700 3.400 Q14 7.500 11.700 11.600"/><path d="M13.900 1.600 Q17.300 7.500 13.900 13.400"/></g></svg>
<svg style="position:absolute;left:1609px;top:16px" width="16" height="17" viewBox="0 0 16 17"><path d="M8 .8 C4.600 .8 2.800 3.400 2.800 6.500 V9.800 L1 12.600 Q.8 13.300 1.600 13.300 H14.400 Q15.200 13.300 15 12.600 L13.200 9.800 V6.500 C13.200 3.400 11.400 .8 8 .8Z" fill="#003e92"/><path d="M5.800 14.400 H10.200 Q9.600 16.200 8 16.200 Q6.400 16.200 5.800 14.400Z" fill="#003e92"/></svg>
</div>
</div>
</body>
</html>
